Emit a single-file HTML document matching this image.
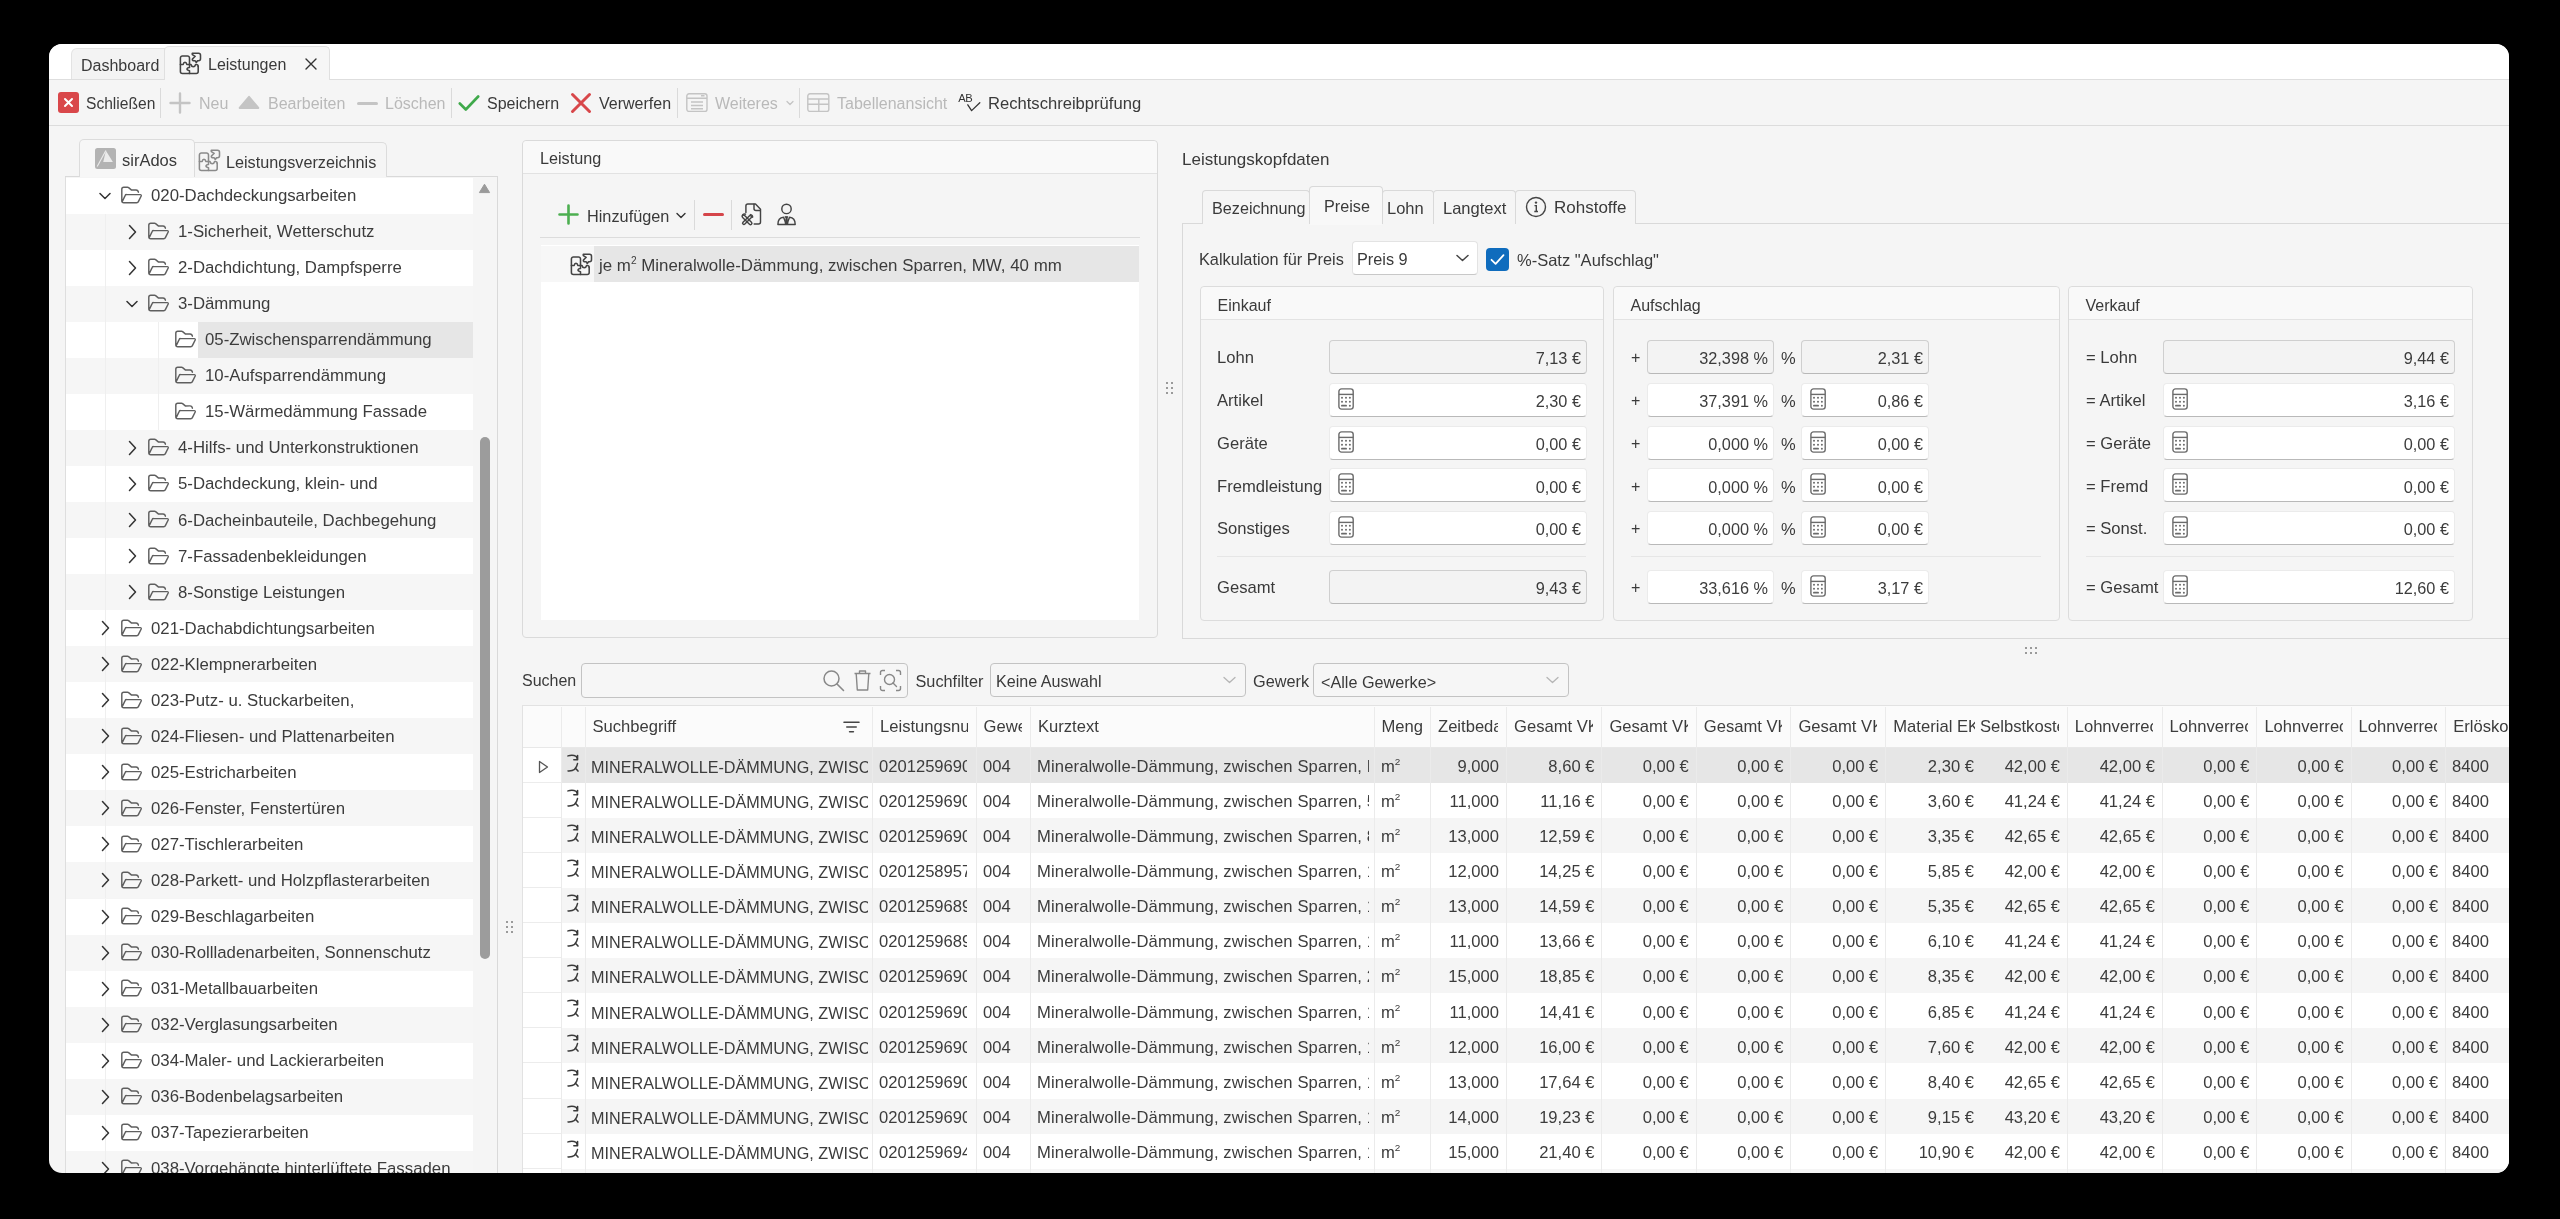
<!DOCTYPE html><html><head><meta charset="utf-8"><title>Leistungen</title><style>

html,body{margin:0;padding:0;}
body{width:2560px;height:1219px;background:#000;position:relative;overflow:hidden;font-family:"Liberation Sans",sans-serif;}
.a{position:absolute;box-sizing:border-box;}
.t{white-space:nowrap;}
sup{font-size:60%;line-height:0;vertical-align:0.68em;}
#win{position:absolute;left:49px;top:44px;width:2460px;height:1129px;border-radius:13px;background:#f5f5f5;overflow:hidden;}

</style></head><body>
<div id="win"></div>
<div class="a" style="left:0;top:0;width:2560px;height:1219px;clip-path:inset(44px 51px 46px 49px round 13px);will-change:transform;">
<div class="a" style="left:49px;top:44px;width:2460px;height:36px;background:#ffffff;"></div>
<div class="a" style="left:71px;top:48px;width:94px;height:32px;background:#f3f3f3;border:1px solid #e3e3e3;border-bottom:none;border-radius:6px 0 0 0;"></div>
<div class="a t" style="left:81px;top:53.6px;line-height:24px;font-size:16px;color:#3a3a3a;">Dashboard</div>
<div class="a" style="left:49px;top:79px;width:2460px;height:1px;background:#dedede;"></div>
<div class="a" style="left:164px;top:46px;width:166px;height:35px;background:#f6f6f6;border:1px solid #e0e0e0;border-bottom:none;border-radius:5px 5px 0 0;"></div>
<svg class="a" style="left:176.0px;top:48.0px;" width="30" height="30" viewBox="0 0 30 30" fill="none"><g stroke="#444" stroke-width="1.55" stroke-linejoin="round" stroke-linecap="round" fill="none"><path d="M13.5 16.5 V9.9 A2 2 0 0 0 11.5 7.9 H6.4 A2 2 0 0 0 4.4 9.9 V23.4 A2 2 0 0 0 6.4 25.4 H20.2 A2 2 0 0 0 22.2 23.4 V18.5"/><path d="M4.4 16.5 H7.2 C7.6 13.6 10.4 13.6 10.8 16.5 H15 C15.6 19.4 18.9 19.4 19.6 16.5 H20.2 A2 2 0 0 1 22.2 18.5"/><path d="M13.5 16.5 V19.5 C10.2 19.8 10.2 22.2 13.5 22.7 V25.4"/><path d="M16.3 5.2 C16 6.3 16.5 7 17.5 7.3 L19.2 8.3 L17 10.5 C16.2 11 16 12 17 12.7 L19.2 12.8 L20.3 14.5 L21.5 12.8 H22.5 A2 2 0 0 0 24.5 10.8 V7.2 A2 2 0 0 0 22.5 5.2 Z"/></g></svg>
<div class="a t" style="left:208px;top:52.5px;line-height:24px;font-size:16px;color:#3a3a3a;">Leistungen</div>
<svg class="a" style="left:304px;top:57px;" width="14" height="14" viewBox="0 0 14 14" fill="none"><path d="M2 2 L12 12 M12 2 L2 12" stroke="#333" stroke-width="1.4" stroke-linecap="round"/></svg>
<div class="a" style="left:49px;top:80px;width:2460px;height:45px;background:#f5f5f5;"></div>
<div class="a" style="left:49px;top:125px;width:2460px;height:1px;background:#dcdcdc;"></div>
<div class="a" style="left:58px;top:92px;width:21px;height:21px;background:#d9474a;border-radius:3px;"></div>
<svg class="a" style="left:58px;top:92px;" width="21" height="21" viewBox="0 0 21 21" fill="none"><path d="M7 7 L14 14 M14 7 L7 14" stroke="#fff" stroke-width="2" stroke-linecap="round"/></svg>
<div class="a t" style="left:86px;top:91.5px;line-height:24px;font-size:15.6px;color:#3a3a3a;">Schließen</div>
<div class="a" style="left:160px;top:88px;width:1px;height:30px;background:#dadada;"></div>
<svg class="a" style="left:169px;top:92px;" width="22" height="22" viewBox="0 0 22 22" fill="none"><path d="M11 1.5 V20.5 M1.5 11 H20.5" stroke="#c4c4c4" stroke-width="2.4" stroke-linecap="round"/></svg>
<div class="a t" style="left:199px;top:91.5px;line-height:24px;font-size:16px;color:#b9b9b9;">Neu</div>
<svg class="a" style="left:238px;top:95px;" width="22" height="15" viewBox="0 0 22 15" fill="none"><path d="M11 1.8 L20.3 13 H1.7 Z" fill="#c4c4c4" stroke="#c4c4c4" stroke-width="2" stroke-linejoin="round"/></svg>
<div class="a t" style="left:268px;top:91.5px;line-height:24px;font-size:16px;color:#b9b9b9;">Bearbeiten</div>
<div class="a" style="left:357px;top:102px;width:21px;height:3px;background:#c4c4c4;border-radius:1.5px;"></div>
<div class="a t" style="left:385px;top:91.5px;line-height:24px;font-size:16px;color:#b9b9b9;">Löschen</div>
<div class="a" style="left:451px;top:88px;width:1px;height:30px;background:#dadada;"></div>
<svg class="a" style="left:458px;top:94px;" width="22" height="18" viewBox="0 0 22 18" fill="none"><path d="M1.8 9.5 L7.8 15.5 L20.2 2.5" stroke="#3fa94a" stroke-width="2.6" stroke-linecap="round" stroke-linejoin="round"/></svg>
<div class="a t" style="left:487px;top:91.5px;line-height:24px;font-size:16px;color:#3a3a3a;">Speichern</div>
<svg class="a" style="left:570px;top:92px;" width="22" height="22" viewBox="0 0 22 22" fill="none"><path d="M2.5 2.5 L19.5 19.5 M19.5 2.5 L2.5 19.5" stroke="#d8474a" stroke-width="3" stroke-linecap="round"/></svg>
<div class="a t" style="left:599px;top:91.5px;line-height:24px;font-size:16px;color:#3a3a3a;">Verwerfen</div>
<div class="a" style="left:677px;top:88px;width:1px;height:30px;background:#dadada;"></div>
<svg class="a" style="left:686px;top:93px;" width="22" height="20" viewBox="0 0 22 20" fill="none"><g stroke="#c4c4c4" stroke-width="1.4" fill="none"><rect x="0.8" y="0.8" width="20.2" height="17.6" rx="2.2"/><path d="M0.8 5.2 H21 M5 9 H17 M5 12.5 H17 M5 15.8 H17 M15 2.8 H18.5"/></g></svg>
<div class="a t" style="left:715px;top:91.5px;line-height:24px;font-size:16px;color:#b9b9b9;">Weiteres</div>
<svg class="a" style="left:785.5px;top:100px;" width="8" height="6" viewBox="0 0 8 6" fill="none"><path d="M1 1.5 L4.0 4.5 L7 1.5" stroke="#c4c4c4" stroke-width="1.3" stroke-linecap="round" stroke-linejoin="round"/></svg>
<div class="a" style="left:799px;top:88px;width:1px;height:30px;background:#dadada;"></div>
<svg class="a" style="left:807px;top:93px;" width="23" height="20" viewBox="0 0 23 20" fill="none"><g stroke="#c4c4c4" stroke-width="1.4" fill="none"><rect x="0.8" y="0.8" width="21" height="17.6" rx="2.2"/><path d="M0.8 6 H21.8 M0.8 11.2 H21.8 M11.8 6 V18.4"/></g></svg>
<div class="a t" style="left:837px;top:91.5px;line-height:24px;font-size:16px;color:#b9b9b9;">Tabellenansicht</div>
<div class="a t" style="left:958.3px;top:91.2px;line-height:14px;font-size:11.2px;color:#333;letter-spacing:-0.4px;">AB</div>
<svg class="a" style="left:966px;top:101px;" width="16" height="12" viewBox="0 0 16 12" fill="none"><path d="M1.8 3.8 L5.6 9.6 L13.8 1.8" stroke="#333" stroke-width="1.3" stroke-linecap="round" stroke-linejoin="round"/></svg>
<div class="a t" style="left:988px;top:91.5px;line-height:24px;font-size:16.6px;color:#3a3a3a;">Rechtschreibprüfung</div>
<div class="a" style="left:65px;top:176px;width:433px;height:1px;background:#d9d9d9;"></div>
<div class="a" style="left:79px;top:139px;width:116px;height:39px;background:#f7f7f7;border:1px solid #dcdcdc;border-bottom:none;border-radius:5px 5px 0 0;"></div>
<div class="a" style="left:194px;top:142px;width:193px;height:35px;background:#f5f5f5;border:1px solid #dcdcdc;border-bottom:none;border-radius:0 5px 0 0;"></div>
<svg class="a" style="left:95px;top:148px;" width="21" height="21" viewBox="0 0 21 21" fill="none"><rect x="0" y="0" width="21" height="21" rx="2.5" fill="#b3b3b3"/><path d="M10.9 2.8 L17.9 14 H8.2 Z" fill="#ebebeb"/><path d="M10.9 2.6 L2.2 18.6" stroke="#ebebeb" stroke-width="1.1"/></svg>
<div class="a t" style="left:122px;top:147.5px;line-height:24px;font-size:16.5px;color:#3a3a3a;">sirAdos</div>
<svg class="a" style="left:195.0px;top:144.70000000000002px;" width="30" height="30" viewBox="0 0 30 30" fill="none"><g stroke="#8a8a8a" stroke-width="1.55" stroke-linejoin="round" stroke-linecap="round" fill="none"><path d="M13.5 16.5 V9.9 A2 2 0 0 0 11.5 7.9 H6.4 A2 2 0 0 0 4.4 9.9 V23.4 A2 2 0 0 0 6.4 25.4 H20.2 A2 2 0 0 0 22.2 23.4 V18.5"/><path d="M4.4 16.5 H7.2 C7.6 13.6 10.4 13.6 10.8 16.5 H15 C15.6 19.4 18.9 19.4 19.6 16.5 H20.2 A2 2 0 0 1 22.2 18.5"/><path d="M13.5 16.5 V19.5 C10.2 19.8 10.2 22.2 13.5 22.7 V25.4"/><path d="M16.3 5.2 C16 6.3 16.5 7 17.5 7.3 L19.2 8.3 L17 10.5 C16.2 11 16 12 17 12.7 L19.2 12.8 L20.3 14.5 L21.5 12.8 H22.5 A2 2 0 0 0 24.5 10.8 V7.2 A2 2 0 0 0 22.5 5.2 Z"/></g></svg>
<div class="a t" style="left:226px;top:149.5px;line-height:24px;font-size:16.2px;color:#3a3a3a;">Leistungsverzeichnis</div>
<div class="a" style="left:65px;top:177px;width:433px;height:996px;background:#f5f5f5;border-left:1px solid #dedede;border-right:1px solid #d9d9d9;"></div>
<div class="a" style="left:66px;top:177.5px;width:407px;height:36px;background:#ffffff;"></div>
<svg class="a" style="left:99px;top:191.5px;" width="12" height="8" viewBox="0 0 12 8" fill="none"><path d="M1 1.5 L6.0 6.5 L11 1.5" stroke="#333" stroke-width="1.5" stroke-linecap="round" stroke-linejoin="round"/></svg>
<svg class="a" style="left:116px;top:182.0px;" width="30" height="26" viewBox="0 0 30 26" fill="none"><path d="M22.4 10.2 C22.2 8.8 21.3 7.9 20 7.9 H15.3 L12.6 5.6 C12.3 5.35 12 5.3 11.6 5.3 H7.8 A2 2 0 0 0 5.8 7.3 V18.7 A2 2 0 0 0 7.8 20.7 H20.6 A2 2 0 0 0 22.5 19.4 L25.2 14 A1 1 0 0 0 24.3 12.6 H10.6 A1.6 1.6 0 0 0 9.1 13.6 L6.2 19.8" stroke="#5f5f5f" stroke-width="1.45" stroke-linejoin="round" stroke-linecap="round" fill="none"/></svg>
<div class="a t" style="left:151px;top:184.0px;line-height:24px;font-size:16.8px;color:#3c3c3c;">020-Dachdeckungsarbeiten</div>
<div class="a" style="left:66px;top:213.55px;width:407px;height:36px;background:#f6f6f6;"></div>
<div class="a" style="left:105px;top:213.55px;width:1px;height:36.05px;background:#efefef;"></div>
<svg class="a" style="left:128px;top:223.55px;" width="9" height="16" viewBox="0 0 9 16" fill="none"><path d="M1.5 1.5 L7.5 8 L1.5 14.5" stroke="#333" stroke-width="1.5" stroke-linecap="round" stroke-linejoin="round"/></svg>
<svg class="a" style="left:143px;top:218.05px;" width="30" height="26" viewBox="0 0 30 26" fill="none"><path d="M22.4 10.2 C22.2 8.8 21.3 7.9 20 7.9 H15.3 L12.6 5.6 C12.3 5.35 12 5.3 11.6 5.3 H7.8 A2 2 0 0 0 5.8 7.3 V18.7 A2 2 0 0 0 7.8 20.7 H20.6 A2 2 0 0 0 22.5 19.4 L25.2 14 A1 1 0 0 0 24.3 12.6 H10.6 A1.6 1.6 0 0 0 9.1 13.6 L6.2 19.8" stroke="#5f5f5f" stroke-width="1.45" stroke-linejoin="round" stroke-linecap="round" fill="none"/></svg>
<div class="a t" style="left:178px;top:220.1px;line-height:24px;font-size:16.8px;color:#3c3c3c;">1-Sicherheit, Wetterschutz</div>
<div class="a" style="left:66px;top:249.6px;width:407px;height:36px;background:#ffffff;"></div>
<div class="a" style="left:105px;top:249.6px;width:1px;height:36.05px;background:#efefef;"></div>
<svg class="a" style="left:128px;top:259.6px;" width="9" height="16" viewBox="0 0 9 16" fill="none"><path d="M1.5 1.5 L7.5 8 L1.5 14.5" stroke="#333" stroke-width="1.5" stroke-linecap="round" stroke-linejoin="round"/></svg>
<svg class="a" style="left:143px;top:254.10000000000002px;" width="30" height="26" viewBox="0 0 30 26" fill="none"><path d="M22.4 10.2 C22.2 8.8 21.3 7.9 20 7.9 H15.3 L12.6 5.6 C12.3 5.35 12 5.3 11.6 5.3 H7.8 A2 2 0 0 0 5.8 7.3 V18.7 A2 2 0 0 0 7.8 20.7 H20.6 A2 2 0 0 0 22.5 19.4 L25.2 14 A1 1 0 0 0 24.3 12.6 H10.6 A1.6 1.6 0 0 0 9.1 13.6 L6.2 19.8" stroke="#5f5f5f" stroke-width="1.45" stroke-linejoin="round" stroke-linecap="round" fill="none"/></svg>
<div class="a t" style="left:178px;top:256.1px;line-height:24px;font-size:16.8px;color:#3c3c3c;">2-Dachdichtung, Dampfsperre</div>
<div class="a" style="left:66px;top:285.65px;width:407px;height:36px;background:#f6f6f6;"></div>
<div class="a" style="left:105px;top:285.65px;width:1px;height:36.05px;background:#efefef;"></div>
<svg class="a" style="left:126px;top:299.65px;" width="12" height="8" viewBox="0 0 12 8" fill="none"><path d="M1 1.5 L6.0 6.5 L11 1.5" stroke="#333" stroke-width="1.5" stroke-linecap="round" stroke-linejoin="round"/></svg>
<svg class="a" style="left:143px;top:290.15px;" width="30" height="26" viewBox="0 0 30 26" fill="none"><path d="M22.4 10.2 C22.2 8.8 21.3 7.9 20 7.9 H15.3 L12.6 5.6 C12.3 5.35 12 5.3 11.6 5.3 H7.8 A2 2 0 0 0 5.8 7.3 V18.7 A2 2 0 0 0 7.8 20.7 H20.6 A2 2 0 0 0 22.5 19.4 L25.2 14 A1 1 0 0 0 24.3 12.6 H10.6 A1.6 1.6 0 0 0 9.1 13.6 L6.2 19.8" stroke="#5f5f5f" stroke-width="1.45" stroke-linejoin="round" stroke-linecap="round" fill="none"/></svg>
<div class="a t" style="left:178px;top:292.1px;line-height:24px;font-size:16.8px;color:#3c3c3c;">3-Dämmung</div>
<div class="a" style="left:66px;top:321.7px;width:407px;height:36px;background:#ffffff;"></div>
<div class="a" style="left:198px;top:321.7px;width:275px;height:36px;background:#e6e6e6;"></div>
<div class="a" style="left:105px;top:321.7px;width:1px;height:36.05px;background:#efefef;"></div>
<div class="a" style="left:158px;top:321.7px;width:1px;height:36.05px;background:#efefef;"></div>
<svg class="a" style="left:170px;top:326.2px;" width="30" height="26" viewBox="0 0 30 26" fill="none"><path d="M22.4 10.2 C22.2 8.8 21.3 7.9 20 7.9 H15.3 L12.6 5.6 C12.3 5.35 12 5.3 11.6 5.3 H7.8 A2 2 0 0 0 5.8 7.3 V18.7 A2 2 0 0 0 7.8 20.7 H20.6 A2 2 0 0 0 22.5 19.4 L25.2 14 A1 1 0 0 0 24.3 12.6 H10.6 A1.6 1.6 0 0 0 9.1 13.6 L6.2 19.8" stroke="#5f5f5f" stroke-width="1.45" stroke-linejoin="round" stroke-linecap="round" fill="none"/></svg>
<div class="a t" style="left:205px;top:328.2px;line-height:24px;font-size:16.8px;color:#3c3c3c;">05-Zwischensparrendämmung</div>
<div class="a" style="left:66px;top:357.75px;width:407px;height:36px;background:#f6f6f6;"></div>
<div class="a" style="left:105px;top:357.75px;width:1px;height:36.05px;background:#efefef;"></div>
<div class="a" style="left:158px;top:357.75px;width:1px;height:36.05px;background:#efefef;"></div>
<svg class="a" style="left:170px;top:362.25px;" width="30" height="26" viewBox="0 0 30 26" fill="none"><path d="M22.4 10.2 C22.2 8.8 21.3 7.9 20 7.9 H15.3 L12.6 5.6 C12.3 5.35 12 5.3 11.6 5.3 H7.8 A2 2 0 0 0 5.8 7.3 V18.7 A2 2 0 0 0 7.8 20.7 H20.6 A2 2 0 0 0 22.5 19.4 L25.2 14 A1 1 0 0 0 24.3 12.6 H10.6 A1.6 1.6 0 0 0 9.1 13.6 L6.2 19.8" stroke="#5f5f5f" stroke-width="1.45" stroke-linejoin="round" stroke-linecap="round" fill="none"/></svg>
<div class="a t" style="left:205px;top:364.2px;line-height:24px;font-size:16.8px;color:#3c3c3c;">10-Aufsparrendämmung</div>
<div class="a" style="left:66px;top:393.79999999999995px;width:407px;height:36px;background:#ffffff;"></div>
<div class="a" style="left:105px;top:393.79999999999995px;width:1px;height:36.05px;background:#efefef;"></div>
<div class="a" style="left:158px;top:393.79999999999995px;width:1px;height:36.05px;background:#efefef;"></div>
<svg class="a" style="left:170px;top:398.29999999999995px;" width="30" height="26" viewBox="0 0 30 26" fill="none"><path d="M22.4 10.2 C22.2 8.8 21.3 7.9 20 7.9 H15.3 L12.6 5.6 C12.3 5.35 12 5.3 11.6 5.3 H7.8 A2 2 0 0 0 5.8 7.3 V18.7 A2 2 0 0 0 7.8 20.7 H20.6 A2 2 0 0 0 22.5 19.4 L25.2 14 A1 1 0 0 0 24.3 12.6 H10.6 A1.6 1.6 0 0 0 9.1 13.6 L6.2 19.8" stroke="#5f5f5f" stroke-width="1.45" stroke-linejoin="round" stroke-linecap="round" fill="none"/></svg>
<div class="a t" style="left:205px;top:400.3px;line-height:24px;font-size:16.8px;color:#3c3c3c;">15-Wärmedämmung Fassade</div>
<div class="a" style="left:66px;top:429.84999999999997px;width:407px;height:36px;background:#f6f6f6;"></div>
<div class="a" style="left:105px;top:429.84999999999997px;width:1px;height:36.05px;background:#efefef;"></div>
<svg class="a" style="left:128px;top:439.84999999999997px;" width="9" height="16" viewBox="0 0 9 16" fill="none"><path d="M1.5 1.5 L7.5 8 L1.5 14.5" stroke="#333" stroke-width="1.5" stroke-linecap="round" stroke-linejoin="round"/></svg>
<svg class="a" style="left:143px;top:434.34999999999997px;" width="30" height="26" viewBox="0 0 30 26" fill="none"><path d="M22.4 10.2 C22.2 8.8 21.3 7.9 20 7.9 H15.3 L12.6 5.6 C12.3 5.35 12 5.3 11.6 5.3 H7.8 A2 2 0 0 0 5.8 7.3 V18.7 A2 2 0 0 0 7.8 20.7 H20.6 A2 2 0 0 0 22.5 19.4 L25.2 14 A1 1 0 0 0 24.3 12.6 H10.6 A1.6 1.6 0 0 0 9.1 13.6 L6.2 19.8" stroke="#5f5f5f" stroke-width="1.45" stroke-linejoin="round" stroke-linecap="round" fill="none"/></svg>
<div class="a t" style="left:178px;top:436.3px;line-height:24px;font-size:16.8px;color:#3c3c3c;">4-Hilfs- und Unterkonstruktionen</div>
<div class="a" style="left:66px;top:465.9px;width:407px;height:36px;background:#ffffff;"></div>
<div class="a" style="left:105px;top:465.9px;width:1px;height:36.05px;background:#efefef;"></div>
<svg class="a" style="left:128px;top:475.9px;" width="9" height="16" viewBox="0 0 9 16" fill="none"><path d="M1.5 1.5 L7.5 8 L1.5 14.5" stroke="#333" stroke-width="1.5" stroke-linecap="round" stroke-linejoin="round"/></svg>
<svg class="a" style="left:143px;top:470.4px;" width="30" height="26" viewBox="0 0 30 26" fill="none"><path d="M22.4 10.2 C22.2 8.8 21.3 7.9 20 7.9 H15.3 L12.6 5.6 C12.3 5.35 12 5.3 11.6 5.3 H7.8 A2 2 0 0 0 5.8 7.3 V18.7 A2 2 0 0 0 7.8 20.7 H20.6 A2 2 0 0 0 22.5 19.4 L25.2 14 A1 1 0 0 0 24.3 12.6 H10.6 A1.6 1.6 0 0 0 9.1 13.6 L6.2 19.8" stroke="#5f5f5f" stroke-width="1.45" stroke-linejoin="round" stroke-linecap="round" fill="none"/></svg>
<div class="a t" style="left:178px;top:472.4px;line-height:24px;font-size:16.8px;color:#3c3c3c;">5-Dachdeckung, klein- und</div>
<div class="a" style="left:66px;top:501.95px;width:407px;height:36px;background:#f6f6f6;"></div>
<div class="a" style="left:105px;top:501.95px;width:1px;height:36.05px;background:#efefef;"></div>
<svg class="a" style="left:128px;top:511.95000000000005px;" width="9" height="16" viewBox="0 0 9 16" fill="none"><path d="M1.5 1.5 L7.5 8 L1.5 14.5" stroke="#333" stroke-width="1.5" stroke-linecap="round" stroke-linejoin="round"/></svg>
<svg class="a" style="left:143px;top:506.45000000000005px;" width="30" height="26" viewBox="0 0 30 26" fill="none"><path d="M22.4 10.2 C22.2 8.8 21.3 7.9 20 7.9 H15.3 L12.6 5.6 C12.3 5.35 12 5.3 11.6 5.3 H7.8 A2 2 0 0 0 5.8 7.3 V18.7 A2 2 0 0 0 7.8 20.7 H20.6 A2 2 0 0 0 22.5 19.4 L25.2 14 A1 1 0 0 0 24.3 12.6 H10.6 A1.6 1.6 0 0 0 9.1 13.6 L6.2 19.8" stroke="#5f5f5f" stroke-width="1.45" stroke-linejoin="round" stroke-linecap="round" fill="none"/></svg>
<div class="a t" style="left:178px;top:508.5px;line-height:24px;font-size:16.8px;color:#3c3c3c;">6-Dacheinbauteile, Dachbegehung</div>
<div class="a" style="left:66px;top:538.0px;width:407px;height:36px;background:#ffffff;"></div>
<div class="a" style="left:105px;top:538.0px;width:1px;height:36.05px;background:#efefef;"></div>
<svg class="a" style="left:128px;top:548.0px;" width="9" height="16" viewBox="0 0 9 16" fill="none"><path d="M1.5 1.5 L7.5 8 L1.5 14.5" stroke="#333" stroke-width="1.5" stroke-linecap="round" stroke-linejoin="round"/></svg>
<svg class="a" style="left:143px;top:542.5px;" width="30" height="26" viewBox="0 0 30 26" fill="none"><path d="M22.4 10.2 C22.2 8.8 21.3 7.9 20 7.9 H15.3 L12.6 5.6 C12.3 5.35 12 5.3 11.6 5.3 H7.8 A2 2 0 0 0 5.8 7.3 V18.7 A2 2 0 0 0 7.8 20.7 H20.6 A2 2 0 0 0 22.5 19.4 L25.2 14 A1 1 0 0 0 24.3 12.6 H10.6 A1.6 1.6 0 0 0 9.1 13.6 L6.2 19.8" stroke="#5f5f5f" stroke-width="1.45" stroke-linejoin="round" stroke-linecap="round" fill="none"/></svg>
<div class="a t" style="left:178px;top:544.5px;line-height:24px;font-size:16.8px;color:#3c3c3c;">7-Fassadenbekleidungen</div>
<div class="a" style="left:66px;top:574.05px;width:407px;height:36px;background:#f6f6f6;"></div>
<div class="a" style="left:105px;top:574.05px;width:1px;height:36.05px;background:#efefef;"></div>
<svg class="a" style="left:128px;top:584.05px;" width="9" height="16" viewBox="0 0 9 16" fill="none"><path d="M1.5 1.5 L7.5 8 L1.5 14.5" stroke="#333" stroke-width="1.5" stroke-linecap="round" stroke-linejoin="round"/></svg>
<svg class="a" style="left:143px;top:578.55px;" width="30" height="26" viewBox="0 0 30 26" fill="none"><path d="M22.4 10.2 C22.2 8.8 21.3 7.9 20 7.9 H15.3 L12.6 5.6 C12.3 5.35 12 5.3 11.6 5.3 H7.8 A2 2 0 0 0 5.8 7.3 V18.7 A2 2 0 0 0 7.8 20.7 H20.6 A2 2 0 0 0 22.5 19.4 L25.2 14 A1 1 0 0 0 24.3 12.6 H10.6 A1.6 1.6 0 0 0 9.1 13.6 L6.2 19.8" stroke="#5f5f5f" stroke-width="1.45" stroke-linejoin="round" stroke-linecap="round" fill="none"/></svg>
<div class="a t" style="left:178px;top:580.5px;line-height:24px;font-size:16.8px;color:#3c3c3c;">8-Sonstige Leistungen</div>
<div class="a" style="left:66px;top:610.0999999999999px;width:407px;height:36px;background:#ffffff;"></div>
<div class="a" style="left:105px;top:610.0999999999999px;width:1px;height:36.05px;background:#efefef;"></div>
<svg class="a" style="left:101px;top:620.0999999999999px;" width="9" height="16" viewBox="0 0 9 16" fill="none"><path d="M1.5 1.5 L7.5 8 L1.5 14.5" stroke="#333" stroke-width="1.5" stroke-linecap="round" stroke-linejoin="round"/></svg>
<svg class="a" style="left:116px;top:614.5999999999999px;" width="30" height="26" viewBox="0 0 30 26" fill="none"><path d="M22.4 10.2 C22.2 8.8 21.3 7.9 20 7.9 H15.3 L12.6 5.6 C12.3 5.35 12 5.3 11.6 5.3 H7.8 A2 2 0 0 0 5.8 7.3 V18.7 A2 2 0 0 0 7.8 20.7 H20.6 A2 2 0 0 0 22.5 19.4 L25.2 14 A1 1 0 0 0 24.3 12.6 H10.6 A1.6 1.6 0 0 0 9.1 13.6 L6.2 19.8" stroke="#5f5f5f" stroke-width="1.45" stroke-linejoin="round" stroke-linecap="round" fill="none"/></svg>
<div class="a t" style="left:151px;top:616.6px;line-height:24px;font-size:16.8px;color:#3c3c3c;">021-Dachabdichtungsarbeiten</div>
<div class="a" style="left:66px;top:646.15px;width:407px;height:36px;background:#f6f6f6;"></div>
<div class="a" style="left:105px;top:646.15px;width:1px;height:36.05px;background:#efefef;"></div>
<svg class="a" style="left:101px;top:656.15px;" width="9" height="16" viewBox="0 0 9 16" fill="none"><path d="M1.5 1.5 L7.5 8 L1.5 14.5" stroke="#333" stroke-width="1.5" stroke-linecap="round" stroke-linejoin="round"/></svg>
<svg class="a" style="left:116px;top:650.65px;" width="30" height="26" viewBox="0 0 30 26" fill="none"><path d="M22.4 10.2 C22.2 8.8 21.3 7.9 20 7.9 H15.3 L12.6 5.6 C12.3 5.35 12 5.3 11.6 5.3 H7.8 A2 2 0 0 0 5.8 7.3 V18.7 A2 2 0 0 0 7.8 20.7 H20.6 A2 2 0 0 0 22.5 19.4 L25.2 14 A1 1 0 0 0 24.3 12.6 H10.6 A1.6 1.6 0 0 0 9.1 13.6 L6.2 19.8" stroke="#5f5f5f" stroke-width="1.45" stroke-linejoin="round" stroke-linecap="round" fill="none"/></svg>
<div class="a t" style="left:151px;top:652.6px;line-height:24px;font-size:16.8px;color:#3c3c3c;">022-Klempnerarbeiten</div>
<div class="a" style="left:66px;top:682.1999999999999px;width:407px;height:36px;background:#ffffff;"></div>
<div class="a" style="left:105px;top:682.1999999999999px;width:1px;height:36.05px;background:#efefef;"></div>
<svg class="a" style="left:101px;top:692.1999999999999px;" width="9" height="16" viewBox="0 0 9 16" fill="none"><path d="M1.5 1.5 L7.5 8 L1.5 14.5" stroke="#333" stroke-width="1.5" stroke-linecap="round" stroke-linejoin="round"/></svg>
<svg class="a" style="left:116px;top:686.6999999999999px;" width="30" height="26" viewBox="0 0 30 26" fill="none"><path d="M22.4 10.2 C22.2 8.8 21.3 7.9 20 7.9 H15.3 L12.6 5.6 C12.3 5.35 12 5.3 11.6 5.3 H7.8 A2 2 0 0 0 5.8 7.3 V18.7 A2 2 0 0 0 7.8 20.7 H20.6 A2 2 0 0 0 22.5 19.4 L25.2 14 A1 1 0 0 0 24.3 12.6 H10.6 A1.6 1.6 0 0 0 9.1 13.6 L6.2 19.8" stroke="#5f5f5f" stroke-width="1.45" stroke-linejoin="round" stroke-linecap="round" fill="none"/></svg>
<div class="a t" style="left:151px;top:688.7px;line-height:24px;font-size:16.8px;color:#3c3c3c;">023-Putz- u. Stuckarbeiten,</div>
<div class="a" style="left:66px;top:718.25px;width:407px;height:36px;background:#f6f6f6;"></div>
<div class="a" style="left:105px;top:718.25px;width:1px;height:36.05px;background:#efefef;"></div>
<svg class="a" style="left:101px;top:728.25px;" width="9" height="16" viewBox="0 0 9 16" fill="none"><path d="M1.5 1.5 L7.5 8 L1.5 14.5" stroke="#333" stroke-width="1.5" stroke-linecap="round" stroke-linejoin="round"/></svg>
<svg class="a" style="left:116px;top:722.75px;" width="30" height="26" viewBox="0 0 30 26" fill="none"><path d="M22.4 10.2 C22.2 8.8 21.3 7.9 20 7.9 H15.3 L12.6 5.6 C12.3 5.35 12 5.3 11.6 5.3 H7.8 A2 2 0 0 0 5.8 7.3 V18.7 A2 2 0 0 0 7.8 20.7 H20.6 A2 2 0 0 0 22.5 19.4 L25.2 14 A1 1 0 0 0 24.3 12.6 H10.6 A1.6 1.6 0 0 0 9.1 13.6 L6.2 19.8" stroke="#5f5f5f" stroke-width="1.45" stroke-linejoin="round" stroke-linecap="round" fill="none"/></svg>
<div class="a t" style="left:151px;top:724.8px;line-height:24px;font-size:16.8px;color:#3c3c3c;">024-Fliesen- und Plattenarbeiten</div>
<div class="a" style="left:66px;top:754.3px;width:407px;height:36px;background:#ffffff;"></div>
<div class="a" style="left:105px;top:754.3px;width:1px;height:36.05px;background:#efefef;"></div>
<svg class="a" style="left:101px;top:764.3px;" width="9" height="16" viewBox="0 0 9 16" fill="none"><path d="M1.5 1.5 L7.5 8 L1.5 14.5" stroke="#333" stroke-width="1.5" stroke-linecap="round" stroke-linejoin="round"/></svg>
<svg class="a" style="left:116px;top:758.8px;" width="30" height="26" viewBox="0 0 30 26" fill="none"><path d="M22.4 10.2 C22.2 8.8 21.3 7.9 20 7.9 H15.3 L12.6 5.6 C12.3 5.35 12 5.3 11.6 5.3 H7.8 A2 2 0 0 0 5.8 7.3 V18.7 A2 2 0 0 0 7.8 20.7 H20.6 A2 2 0 0 0 22.5 19.4 L25.2 14 A1 1 0 0 0 24.3 12.6 H10.6 A1.6 1.6 0 0 0 9.1 13.6 L6.2 19.8" stroke="#5f5f5f" stroke-width="1.45" stroke-linejoin="round" stroke-linecap="round" fill="none"/></svg>
<div class="a t" style="left:151px;top:760.8px;line-height:24px;font-size:16.8px;color:#3c3c3c;">025-Estricharbeiten</div>
<div class="a" style="left:66px;top:790.3499999999999px;width:407px;height:36px;background:#f6f6f6;"></div>
<div class="a" style="left:105px;top:790.3499999999999px;width:1px;height:36.05px;background:#efefef;"></div>
<svg class="a" style="left:101px;top:800.3499999999999px;" width="9" height="16" viewBox="0 0 9 16" fill="none"><path d="M1.5 1.5 L7.5 8 L1.5 14.5" stroke="#333" stroke-width="1.5" stroke-linecap="round" stroke-linejoin="round"/></svg>
<svg class="a" style="left:116px;top:794.8499999999999px;" width="30" height="26" viewBox="0 0 30 26" fill="none"><path d="M22.4 10.2 C22.2 8.8 21.3 7.9 20 7.9 H15.3 L12.6 5.6 C12.3 5.35 12 5.3 11.6 5.3 H7.8 A2 2 0 0 0 5.8 7.3 V18.7 A2 2 0 0 0 7.8 20.7 H20.6 A2 2 0 0 0 22.5 19.4 L25.2 14 A1 1 0 0 0 24.3 12.6 H10.6 A1.6 1.6 0 0 0 9.1 13.6 L6.2 19.8" stroke="#5f5f5f" stroke-width="1.45" stroke-linejoin="round" stroke-linecap="round" fill="none"/></svg>
<div class="a t" style="left:151px;top:796.8px;line-height:24px;font-size:16.8px;color:#3c3c3c;">026-Fenster, Fenstertüren</div>
<div class="a" style="left:66px;top:826.4px;width:407px;height:36px;background:#ffffff;"></div>
<div class="a" style="left:105px;top:826.4px;width:1px;height:36.05px;background:#efefef;"></div>
<svg class="a" style="left:101px;top:836.4px;" width="9" height="16" viewBox="0 0 9 16" fill="none"><path d="M1.5 1.5 L7.5 8 L1.5 14.5" stroke="#333" stroke-width="1.5" stroke-linecap="round" stroke-linejoin="round"/></svg>
<svg class="a" style="left:116px;top:830.9px;" width="30" height="26" viewBox="0 0 30 26" fill="none"><path d="M22.4 10.2 C22.2 8.8 21.3 7.9 20 7.9 H15.3 L12.6 5.6 C12.3 5.35 12 5.3 11.6 5.3 H7.8 A2 2 0 0 0 5.8 7.3 V18.7 A2 2 0 0 0 7.8 20.7 H20.6 A2 2 0 0 0 22.5 19.4 L25.2 14 A1 1 0 0 0 24.3 12.6 H10.6 A1.6 1.6 0 0 0 9.1 13.6 L6.2 19.8" stroke="#5f5f5f" stroke-width="1.45" stroke-linejoin="round" stroke-linecap="round" fill="none"/></svg>
<div class="a t" style="left:151px;top:832.9px;line-height:24px;font-size:16.8px;color:#3c3c3c;">027-Tischlerarbeiten</div>
<div class="a" style="left:66px;top:862.4499999999999px;width:407px;height:36px;background:#f6f6f6;"></div>
<div class="a" style="left:105px;top:862.4499999999999px;width:1px;height:36.05px;background:#efefef;"></div>
<svg class="a" style="left:101px;top:872.4499999999999px;" width="9" height="16" viewBox="0 0 9 16" fill="none"><path d="M1.5 1.5 L7.5 8 L1.5 14.5" stroke="#333" stroke-width="1.5" stroke-linecap="round" stroke-linejoin="round"/></svg>
<svg class="a" style="left:116px;top:866.9499999999999px;" width="30" height="26" viewBox="0 0 30 26" fill="none"><path d="M22.4 10.2 C22.2 8.8 21.3 7.9 20 7.9 H15.3 L12.6 5.6 C12.3 5.35 12 5.3 11.6 5.3 H7.8 A2 2 0 0 0 5.8 7.3 V18.7 A2 2 0 0 0 7.8 20.7 H20.6 A2 2 0 0 0 22.5 19.4 L25.2 14 A1 1 0 0 0 24.3 12.6 H10.6 A1.6 1.6 0 0 0 9.1 13.6 L6.2 19.8" stroke="#5f5f5f" stroke-width="1.45" stroke-linejoin="round" stroke-linecap="round" fill="none"/></svg>
<div class="a t" style="left:151px;top:868.9px;line-height:24px;font-size:16.8px;color:#3c3c3c;">028-Parkett- und Holzpflasterarbeiten</div>
<div class="a" style="left:66px;top:898.5px;width:407px;height:36px;background:#ffffff;"></div>
<div class="a" style="left:105px;top:898.5px;width:1px;height:36.05px;background:#efefef;"></div>
<svg class="a" style="left:101px;top:908.5px;" width="9" height="16" viewBox="0 0 9 16" fill="none"><path d="M1.5 1.5 L7.5 8 L1.5 14.5" stroke="#333" stroke-width="1.5" stroke-linecap="round" stroke-linejoin="round"/></svg>
<svg class="a" style="left:116px;top:903.0px;" width="30" height="26" viewBox="0 0 30 26" fill="none"><path d="M22.4 10.2 C22.2 8.8 21.3 7.9 20 7.9 H15.3 L12.6 5.6 C12.3 5.35 12 5.3 11.6 5.3 H7.8 A2 2 0 0 0 5.8 7.3 V18.7 A2 2 0 0 0 7.8 20.7 H20.6 A2 2 0 0 0 22.5 19.4 L25.2 14 A1 1 0 0 0 24.3 12.6 H10.6 A1.6 1.6 0 0 0 9.1 13.6 L6.2 19.8" stroke="#5f5f5f" stroke-width="1.45" stroke-linejoin="round" stroke-linecap="round" fill="none"/></svg>
<div class="a t" style="left:151px;top:905.0px;line-height:24px;font-size:16.8px;color:#3c3c3c;">029-Beschlagarbeiten</div>
<div class="a" style="left:66px;top:934.55px;width:407px;height:36px;background:#f6f6f6;"></div>
<div class="a" style="left:105px;top:934.55px;width:1px;height:36.05px;background:#efefef;"></div>
<svg class="a" style="left:101px;top:944.55px;" width="9" height="16" viewBox="0 0 9 16" fill="none"><path d="M1.5 1.5 L7.5 8 L1.5 14.5" stroke="#333" stroke-width="1.5" stroke-linecap="round" stroke-linejoin="round"/></svg>
<svg class="a" style="left:116px;top:939.05px;" width="30" height="26" viewBox="0 0 30 26" fill="none"><path d="M22.4 10.2 C22.2 8.8 21.3 7.9 20 7.9 H15.3 L12.6 5.6 C12.3 5.35 12 5.3 11.6 5.3 H7.8 A2 2 0 0 0 5.8 7.3 V18.7 A2 2 0 0 0 7.8 20.7 H20.6 A2 2 0 0 0 22.5 19.4 L25.2 14 A1 1 0 0 0 24.3 12.6 H10.6 A1.6 1.6 0 0 0 9.1 13.6 L6.2 19.8" stroke="#5f5f5f" stroke-width="1.45" stroke-linejoin="round" stroke-linecap="round" fill="none"/></svg>
<div class="a t" style="left:151px;top:941.0px;line-height:24px;font-size:16.8px;color:#3c3c3c;">030-Rollladenarbeiten, Sonnenschutz</div>
<div class="a" style="left:66px;top:970.5999999999999px;width:407px;height:36px;background:#ffffff;"></div>
<div class="a" style="left:105px;top:970.5999999999999px;width:1px;height:36.05px;background:#efefef;"></div>
<svg class="a" style="left:101px;top:980.5999999999999px;" width="9" height="16" viewBox="0 0 9 16" fill="none"><path d="M1.5 1.5 L7.5 8 L1.5 14.5" stroke="#333" stroke-width="1.5" stroke-linecap="round" stroke-linejoin="round"/></svg>
<svg class="a" style="left:116px;top:975.0999999999999px;" width="30" height="26" viewBox="0 0 30 26" fill="none"><path d="M22.4 10.2 C22.2 8.8 21.3 7.9 20 7.9 H15.3 L12.6 5.6 C12.3 5.35 12 5.3 11.6 5.3 H7.8 A2 2 0 0 0 5.8 7.3 V18.7 A2 2 0 0 0 7.8 20.7 H20.6 A2 2 0 0 0 22.5 19.4 L25.2 14 A1 1 0 0 0 24.3 12.6 H10.6 A1.6 1.6 0 0 0 9.1 13.6 L6.2 19.8" stroke="#5f5f5f" stroke-width="1.45" stroke-linejoin="round" stroke-linecap="round" fill="none"/></svg>
<div class="a t" style="left:151px;top:977.1px;line-height:24px;font-size:16.8px;color:#3c3c3c;">031-Metallbauarbeiten</div>
<div class="a" style="left:66px;top:1006.65px;width:407px;height:36px;background:#f6f6f6;"></div>
<div class="a" style="left:105px;top:1006.65px;width:1px;height:36.05px;background:#efefef;"></div>
<svg class="a" style="left:101px;top:1016.6500000000001px;" width="9" height="16" viewBox="0 0 9 16" fill="none"><path d="M1.5 1.5 L7.5 8 L1.5 14.5" stroke="#333" stroke-width="1.5" stroke-linecap="round" stroke-linejoin="round"/></svg>
<svg class="a" style="left:116px;top:1011.1500000000001px;" width="30" height="26" viewBox="0 0 30 26" fill="none"><path d="M22.4 10.2 C22.2 8.8 21.3 7.9 20 7.9 H15.3 L12.6 5.6 C12.3 5.35 12 5.3 11.6 5.3 H7.8 A2 2 0 0 0 5.8 7.3 V18.7 A2 2 0 0 0 7.8 20.7 H20.6 A2 2 0 0 0 22.5 19.4 L25.2 14 A1 1 0 0 0 24.3 12.6 H10.6 A1.6 1.6 0 0 0 9.1 13.6 L6.2 19.8" stroke="#5f5f5f" stroke-width="1.45" stroke-linejoin="round" stroke-linecap="round" fill="none"/></svg>
<div class="a t" style="left:151px;top:1013.2px;line-height:24px;font-size:16.8px;color:#3c3c3c;">032-Verglasungsarbeiten</div>
<div class="a" style="left:66px;top:1042.6999999999998px;width:407px;height:36px;background:#ffffff;"></div>
<div class="a" style="left:105px;top:1042.6999999999998px;width:1px;height:36.05px;background:#efefef;"></div>
<svg class="a" style="left:101px;top:1052.6999999999998px;" width="9" height="16" viewBox="0 0 9 16" fill="none"><path d="M1.5 1.5 L7.5 8 L1.5 14.5" stroke="#333" stroke-width="1.5" stroke-linecap="round" stroke-linejoin="round"/></svg>
<svg class="a" style="left:116px;top:1047.1999999999998px;" width="30" height="26" viewBox="0 0 30 26" fill="none"><path d="M22.4 10.2 C22.2 8.8 21.3 7.9 20 7.9 H15.3 L12.6 5.6 C12.3 5.35 12 5.3 11.6 5.3 H7.8 A2 2 0 0 0 5.8 7.3 V18.7 A2 2 0 0 0 7.8 20.7 H20.6 A2 2 0 0 0 22.5 19.4 L25.2 14 A1 1 0 0 0 24.3 12.6 H10.6 A1.6 1.6 0 0 0 9.1 13.6 L6.2 19.8" stroke="#5f5f5f" stroke-width="1.45" stroke-linejoin="round" stroke-linecap="round" fill="none"/></svg>
<div class="a t" style="left:151px;top:1049.2px;line-height:24px;font-size:16.8px;color:#3c3c3c;">034-Maler- und Lackierarbeiten</div>
<div class="a" style="left:66px;top:1078.75px;width:407px;height:36px;background:#f6f6f6;"></div>
<div class="a" style="left:105px;top:1078.75px;width:1px;height:36.05px;background:#efefef;"></div>
<svg class="a" style="left:101px;top:1088.75px;" width="9" height="16" viewBox="0 0 9 16" fill="none"><path d="M1.5 1.5 L7.5 8 L1.5 14.5" stroke="#333" stroke-width="1.5" stroke-linecap="round" stroke-linejoin="round"/></svg>
<svg class="a" style="left:116px;top:1083.25px;" width="30" height="26" viewBox="0 0 30 26" fill="none"><path d="M22.4 10.2 C22.2 8.8 21.3 7.9 20 7.9 H15.3 L12.6 5.6 C12.3 5.35 12 5.3 11.6 5.3 H7.8 A2 2 0 0 0 5.8 7.3 V18.7 A2 2 0 0 0 7.8 20.7 H20.6 A2 2 0 0 0 22.5 19.4 L25.2 14 A1 1 0 0 0 24.3 12.6 H10.6 A1.6 1.6 0 0 0 9.1 13.6 L6.2 19.8" stroke="#5f5f5f" stroke-width="1.45" stroke-linejoin="round" stroke-linecap="round" fill="none"/></svg>
<div class="a t" style="left:151px;top:1085.2px;line-height:24px;font-size:16.8px;color:#3c3c3c;">036-Bodenbelagsarbeiten</div>
<div class="a" style="left:66px;top:1114.8px;width:407px;height:36px;background:#ffffff;"></div>
<div class="a" style="left:105px;top:1114.8px;width:1px;height:36.05px;background:#efefef;"></div>
<svg class="a" style="left:101px;top:1124.8px;" width="9" height="16" viewBox="0 0 9 16" fill="none"><path d="M1.5 1.5 L7.5 8 L1.5 14.5" stroke="#333" stroke-width="1.5" stroke-linecap="round" stroke-linejoin="round"/></svg>
<svg class="a" style="left:116px;top:1119.3px;" width="30" height="26" viewBox="0 0 30 26" fill="none"><path d="M22.4 10.2 C22.2 8.8 21.3 7.9 20 7.9 H15.3 L12.6 5.6 C12.3 5.35 12 5.3 11.6 5.3 H7.8 A2 2 0 0 0 5.8 7.3 V18.7 A2 2 0 0 0 7.8 20.7 H20.6 A2 2 0 0 0 22.5 19.4 L25.2 14 A1 1 0 0 0 24.3 12.6 H10.6 A1.6 1.6 0 0 0 9.1 13.6 L6.2 19.8" stroke="#5f5f5f" stroke-width="1.45" stroke-linejoin="round" stroke-linecap="round" fill="none"/></svg>
<div class="a t" style="left:151px;top:1121.3px;line-height:24px;font-size:16.8px;color:#3c3c3c;">037-Tapezierarbeiten</div>
<div class="a" style="left:66px;top:1150.85px;width:407px;height:36px;background:#f6f6f6;"></div>
<div class="a" style="left:105px;top:1150.85px;width:1px;height:36.05px;background:#efefef;"></div>
<svg class="a" style="left:101px;top:1160.85px;" width="9" height="16" viewBox="0 0 9 16" fill="none"><path d="M1.5 1.5 L7.5 8 L1.5 14.5" stroke="#333" stroke-width="1.5" stroke-linecap="round" stroke-linejoin="round"/></svg>
<svg class="a" style="left:116px;top:1155.35px;" width="30" height="26" viewBox="0 0 30 26" fill="none"><path d="M22.4 10.2 C22.2 8.8 21.3 7.9 20 7.9 H15.3 L12.6 5.6 C12.3 5.35 12 5.3 11.6 5.3 H7.8 A2 2 0 0 0 5.8 7.3 V18.7 A2 2 0 0 0 7.8 20.7 H20.6 A2 2 0 0 0 22.5 19.4 L25.2 14 A1 1 0 0 0 24.3 12.6 H10.6 A1.6 1.6 0 0 0 9.1 13.6 L6.2 19.8" stroke="#5f5f5f" stroke-width="1.45" stroke-linejoin="round" stroke-linecap="round" fill="none"/></svg>
<div class="a t" style="left:151px;top:1157.3px;line-height:24px;font-size:16.8px;color:#3c3c3c;">038-Vorgehängte hinterlüftete Fassaden</div>
<svg class="a" style="left:478px;top:183px;" width="13" height="11" viewBox="0 0 13 11" fill="none"><path d="M6.5 1.2 L11.6 9.6 H1.4 Z" fill="#9a9a9a" stroke="#9a9a9a" stroke-width="1" stroke-linejoin="round"/></svg>
<div class="a" style="left:480px;top:437px;width:10px;height:522px;background:#9c9c9c;border-radius:5px;"></div>
<svg class="a" style="left:506px;top:921px;" width="7" height="12" viewBox="0 0 7 12" fill="none"><rect x="0" y="0" width="2" height="2" fill="#9a9a9a"/><rect x="0" y="5" width="2" height="2" fill="#9a9a9a"/><rect x="0" y="10" width="2" height="2" fill="#9a9a9a"/><rect x="5" y="0" width="2" height="2" fill="#9a9a9a"/><rect x="5" y="5" width="2" height="2" fill="#9a9a9a"/><rect x="5" y="10" width="2" height="2" fill="#9a9a9a"/></svg>
<svg class="a" style="left:1166px;top:382px;" width="7" height="12" viewBox="0 0 7 12" fill="none"><rect x="0" y="0" width="2" height="2" fill="#9a9a9a"/><rect x="0" y="5" width="2" height="2" fill="#9a9a9a"/><rect x="0" y="10" width="2" height="2" fill="#9a9a9a"/><rect x="5" y="0" width="2" height="2" fill="#9a9a9a"/><rect x="5" y="5" width="2" height="2" fill="#9a9a9a"/><rect x="5" y="10" width="2" height="2" fill="#9a9a9a"/></svg>
<svg class="a" style="left:2025px;top:647px;" width="12" height="7" viewBox="0 0 12 7" fill="none"><rect x="0" y="0" width="2" height="2" fill="#9a9a9a"/><rect x="0" y="5" width="2" height="2" fill="#9a9a9a"/><rect x="5" y="0" width="2" height="2" fill="#9a9a9a"/><rect x="5" y="5" width="2" height="2" fill="#9a9a9a"/><rect x="10" y="0" width="2" height="2" fill="#9a9a9a"/><rect x="10" y="5" width="2" height="2" fill="#9a9a9a"/></svg>
<div class="a" style="left:522px;top:140px;width:636px;height:498px;background:#f5f5f5;border:1px solid #dadada;border-radius:4px;"></div>
<div class="a" style="left:523px;top:141px;width:634px;height:33px;background:#f9f9f9;border-bottom:1px solid #e2e2e2;border-radius:4px 4px 0 0;"></div>
<div class="a t" style="left:540px;top:146.0px;line-height:24px;font-size:16.2px;color:#3a3a3a;">Leistung</div>
<svg class="a" style="left:558px;top:204px;" width="21" height="21" viewBox="0 0 21 21" fill="none"><path d="M10.5 1.5 V19.5 M1.5 10.5 H19.5" stroke="#4caf50" stroke-width="2.6" stroke-linecap="round"/></svg>
<div class="a t" style="left:587px;top:203.5px;line-height:24px;font-size:16.3px;color:#3a3a3a;">Hinzufügen</div>
<svg class="a" style="left:676px;top:212px;" width="10" height="7" viewBox="0 0 10 7" fill="none"><path d="M1 1.5 L5.0 5.5 L9 1.5" stroke="#333" stroke-width="1.4" stroke-linecap="round" stroke-linejoin="round"/></svg>
<div class="a" style="left:694px;top:200px;width:1px;height:30px;background:#dadada;"></div>
<div class="a" style="left:703px;top:213px;width:21px;height:3px;background:#d5454a;border-radius:1.5px;"></div>
<div class="a" style="left:731px;top:200px;width:1px;height:30px;background:#dadada;"></div>
<svg class="a" style="left:736px;top:198px;" width="66" height="34" viewBox="0 0 66 34" fill="none"><g stroke="#444" stroke-width="1.45" fill="none" stroke-linejoin="round" stroke-linecap="round"><path d="M9.9 14.6 V8 A2 2 0 0 1 11.9 6 H19.5 L24.5 11.2 V24 A2 2 0 0 1 22.5 26 H18.2"/><path d="M18 6.3 V10.4 A2 2 0 0 0 20 12.4 H24.3"/><rect x="9.6" y="15.6" width="2.8" height="12.5" rx="1.4" transform="rotate(-45 11 21.8)"/><rect x="9.8" y="16.3" width="2.6" height="11.5" rx="1.3" transform="rotate(45 11.1 22)"/><path d="M6.3 17.6 a2.2 2.2 0 0 1 3.2 -1.4 M14.4 16.6 a2.3 2.3 0 0 1 2.2 2.6"/><circle cx="50.5" cy="10.9" r="4.7"/><path d="M41.9 26.4 C41.9 22.3 44.3 19.6 47.6 19.3 L50.3 26.4 Z M59.2 26.4 C59.2 22.3 56.8 19.6 53.5 19.3 L50.8 26.4 Z M41.9 26.5 H59.2"/><path d="M49.3 18.6 H51.8 L51.2 20.8 L52 25.8 H49.1 L49.9 20.8 Z" fill="#444" stroke-width="0.8"/></g></svg>
<div class="a" style="left:540px;top:237px;width:600px;height:1px;background:#dcdcdc;"></div>
<div class="a" style="left:541px;top:245px;width:598px;height:375px;background:#ffffff;"></div>
<div class="a" style="left:541px;top:246px;width:53px;height:36px;background:#f7f7f7;"></div>
<div class="a" style="left:594px;top:246px;width:545px;height:36px;background:#e6e6e6;"></div>
<svg class="a" style="left:566.5px;top:249.0px;" width="30" height="30" viewBox="0 0 30 30" fill="none"><g stroke="#444" stroke-width="1.55" stroke-linejoin="round" stroke-linecap="round" fill="none"><path d="M13.5 16.5 V9.9 A2 2 0 0 0 11.5 7.9 H6.4 A2 2 0 0 0 4.4 9.9 V23.4 A2 2 0 0 0 6.4 25.4 H20.2 A2 2 0 0 0 22.2 23.4 V18.5"/><path d="M4.4 16.5 H7.2 C7.6 13.6 10.4 13.6 10.8 16.5 H15 C15.6 19.4 18.9 19.4 19.6 16.5 H20.2 A2 2 0 0 1 22.2 18.5"/><path d="M13.5 16.5 V19.5 C10.2 19.8 10.2 22.2 13.5 22.7 V25.4"/><path d="M16.3 5.2 C16 6.3 16.5 7 17.5 7.3 L19.2 8.3 L17 10.5 C16.2 11 16 12 17 12.7 L19.2 12.8 L20.3 14.5 L21.5 12.8 H22.5 A2 2 0 0 0 24.5 10.8 V7.2 A2 2 0 0 0 22.5 5.2 Z"/></g></svg>
<div class="a t" style="left:599px;top:254.0px;line-height:24px;font-size:16.9px;color:#3c3c3c;">je m<sup>2</sup> Mineralwolle-Dämmung, zwischen Sparren, MW, 40 mm</div>
<div class="a t" style="left:1182px;top:148.0px;line-height:24px;font-size:17px;color:#3a3a3a;">Leistungskopfdaten</div>
<div class="a" style="left:1182px;top:223px;width:1340px;height:416px;background:#f5f5f5;border:1px solid #d9d9d9;border-right:none;"></div>
<div class="a" style="left:1202px;top:190px;width:108px;height:34px;background:#f5f5f5;border:1px solid #d9d9d9;border-bottom:none;border-radius:4px 4px 0 0;"></div>
<div class="a" style="left:1382px;top:190px;width:52px;height:34px;background:#f5f5f5;border:1px solid #d9d9d9;border-bottom:none;border-radius:4px 4px 0 0;"></div>
<div class="a" style="left:1433px;top:190px;width:83px;height:34px;background:#f5f5f5;border:1px solid #d9d9d9;border-bottom:none;border-radius:4px 4px 0 0;"></div>
<div class="a" style="left:1515px;top:190px;width:121px;height:34px;background:#f5f5f5;border:1px solid #d9d9d9;border-bottom:none;border-radius:4px 4px 0 0;"></div>
<div class="a" style="left:1309px;top:186px;width:74px;height:38px;background:#f8f8f8;border:1px solid #d9d9d9;border-bottom:none;border-radius:4px 4px 0 0;"></div>
<div class="a" style="left:1310px;top:223px;width:72px;height:2px;background:#f8f8f8;"></div>
<div class="a t" style="left:1212px;top:196.0px;line-height:24px;font-size:16.2px;color:#3a3a3a;">Bezeichnung</div>
<div class="a t" style="left:1324px;top:194.0px;line-height:24px;font-size:16.2px;color:#3a3a3a;">Preise</div>
<div class="a t" style="left:1387px;top:196.0px;line-height:24px;font-size:16.5px;color:#3a3a3a;">Lohn</div>
<div class="a t" style="left:1443px;top:196.0px;line-height:24px;font-size:16.5px;color:#3a3a3a;">Langtext</div>
<svg class="a" style="left:1525px;top:196px;" width="22" height="22" viewBox="0 0 22 22" fill="none"><circle cx="11" cy="11" r="9.5" stroke="#444" stroke-width="1.4" fill="none"/><circle cx="11" cy="6.6" r="1.2" fill="#444"/><path d="M9.5 9.6 H11.3 V15.5 M9.3 15.5 H13" stroke="#444" stroke-width="1.4"/></svg>
<div class="a t" style="left:1554px;top:196.0px;line-height:24px;font-size:17px;color:#3a3a3a;">Rohstoffe</div>
<div class="a t" style="left:1199px;top:246.5px;line-height:24px;font-size:16.3px;color:#3a3a3a;">Kalkulation für Preis</div>
<div class="a" style="left:1352px;top:241px;width:126px;height:34px;background:#ffffff;border:1px solid #e3e3e3;border-bottom:1px solid #c8c8c8;border-radius:4px;"></div>
<div class="a t" style="left:1357px;top:246.5px;line-height:24px;font-size:16.3px;color:#3a3a3a;">Preis 9</div>
<svg class="a" style="left:1456px;top:254px;" width="13" height="8" viewBox="0 0 13 8" fill="none"><path d="M1 1.5 L6.5 6.5 L12 1.5" stroke="#444" stroke-width="1.5" stroke-linecap="round" stroke-linejoin="round"/></svg>
<div class="a" style="left:1486px;top:248px;width:23px;height:23px;background:#0f6cbd;border-radius:4px;"></div>
<svg class="a" style="left:1486px;top:248px;" width="23" height="23" viewBox="0 0 23 23" fill="none"><path d="M5.5 11.8 L9.6 15.8 L17.5 7.2" stroke="#fff" stroke-width="1.8" fill="none" stroke-linecap="round" stroke-linejoin="round"/></svg>
<div class="a t" style="left:1517px;top:248.0px;line-height:24px;font-size:16.5px;color:#3a3a3a;">%-Satz "Aufschlag"</div>
<div class="a" style="left:1200px;top:286px;width:404px;height:335px;background:#f5f5f5;border:1px solid #dcdcdc;border-radius:4px;"></div>
<div class="a" style="left:1201px;top:287px;width:402px;height:33px;background:#f9f9f9;border-bottom:1px solid #e3e3e3;border-radius:4px 4px 0 0;"></div>
<div class="a t" style="left:1217.5px;top:294.0px;line-height:24px;font-size:16px;color:#3a3a3a;">Einkauf</div>
<div class="a" style="left:1613px;top:286px;width:447px;height:335px;background:#f5f5f5;border:1px solid #dcdcdc;border-radius:4px;"></div>
<div class="a" style="left:1614px;top:287px;width:445px;height:33px;background:#f9f9f9;border-bottom:1px solid #e3e3e3;border-radius:4px 4px 0 0;"></div>
<div class="a t" style="left:1630.5px;top:294.0px;line-height:24px;font-size:16px;color:#3a3a3a;">Aufschlag</div>
<div class="a" style="left:2068px;top:286px;width:405px;height:335px;background:#f5f5f5;border:1px solid #dcdcdc;border-radius:4px;"></div>
<div class="a" style="left:2069px;top:287px;width:403px;height:33px;background:#f9f9f9;border-bottom:1px solid #e3e3e3;border-radius:4px 4px 0 0;"></div>
<div class="a t" style="left:2085.5px;top:294.0px;line-height:24px;font-size:16px;color:#3a3a3a;">Verkauf</div>
<div class="a" style="left:1217px;top:556px;width:369px;height:1px;background:#e6e6e6;"></div>
<div class="a" style="left:1631px;top:556px;width:410px;height:1px;background:#e6e6e6;"></div>
<div class="a" style="left:2086px;top:556px;width:368px;height:1px;background:#e6e6e6;"></div>
<div class="a t" style="left:1217px;top:346.0px;line-height:24px;font-size:16.6px;color:#3a3a3a;">Lohn</div>
<div class="a" style="left:1329px;top:340px;width:258px;height:34px;background:#f3f3f3;border:1px solid #cfcfcf;border-bottom:1px solid #b8b8b8;border-radius:4px;"></div>
<div class="a t" style="right:979px;top:346.0px;line-height:24px;font-size:16.3px;color:#3c3c3c;text-align:right;">7,13 €</div>
<div class="a t" style="left:1631px;top:346.0px;line-height:24px;font-size:16px;color:#3a3a3a;">+</div>
<div class="a" style="left:1647px;top:340px;width:127px;height:34px;background:#f3f3f3;border:1px solid #cfcfcf;border-bottom:1px solid #b8b8b8;border-radius:4px;"></div>
<div class="a t" style="right:792px;top:346.0px;line-height:24px;font-size:16.3px;color:#3c3c3c;text-align:right;">32,398 %</div>
<div class="a t" style="left:1781px;top:346.0px;line-height:24px;font-size:16.5px;color:#3a3a3a;">%</div>
<div class="a" style="left:1801px;top:340px;width:128px;height:34px;background:#f3f3f3;border:1px solid #cfcfcf;border-bottom:1px solid #b8b8b8;border-radius:4px;"></div>
<div class="a t" style="right:637px;top:346.0px;line-height:24px;font-size:16.3px;color:#3c3c3c;text-align:right;">2,31 €</div>
<div class="a t" style="left:2086px;top:346.0px;line-height:24px;font-size:16.6px;color:#3a3a3a;">= Lohn</div>
<div class="a" style="left:2163px;top:340px;width:292px;height:34px;background:#f3f3f3;border:1px solid #cfcfcf;border-bottom:1px solid #b8b8b8;border-radius:4px;"></div>
<div class="a t" style="right:111px;top:346.0px;line-height:24px;font-size:16.3px;color:#3c3c3c;text-align:right;">9,44 €</div>
<div class="a t" style="left:1217px;top:389.0px;line-height:24px;font-size:16.6px;color:#3a3a3a;">Artikel</div>
<div class="a" style="left:1329px;top:383px;width:258px;height:34px;background:#ffffff;border:1px solid #ebebeb;border-bottom:1px solid #b9b9b9;border-radius:4px;"></div>
<svg class="a" style="left:1338px;top:388px;" width="16" height="22" viewBox="0 0 16 22" fill="none"><g stroke="#6b6b6b" stroke-width="1.4" fill="none"><rect x="0.9" y="0.9" width="14.3" height="20.2" rx="2.6"/><path d="M0.9 6.4 H15.2"/></g><g fill="#6b6b6b"><circle cx="4" cy="9.8" r="1"/><circle cx="8" cy="9.8" r="1"/><circle cx="11.9" cy="9.8" r="1"/><circle cx="4" cy="13.7" r="1"/><circle cx="8" cy="13.7" r="1"/><circle cx="11.9" cy="13.7" r="1"/><rect x="3" y="16.8" width="6" height="1.8" rx="0.9"/><circle cx="11.9" cy="17.7" r="1"/></g></svg>
<div class="a t" style="right:979px;top:389.0px;line-height:24px;font-size:16.3px;color:#3c3c3c;text-align:right;">2,30 €</div>
<div class="a t" style="left:1631px;top:389.0px;line-height:24px;font-size:16px;color:#3a3a3a;">+</div>
<div class="a" style="left:1647px;top:383px;width:127px;height:34px;background:#ffffff;border:1px solid #ebebeb;border-bottom:1px solid #b9b9b9;border-radius:4px;"></div>
<div class="a t" style="right:792px;top:389.0px;line-height:24px;font-size:16.3px;color:#3c3c3c;text-align:right;">37,391 %</div>
<div class="a t" style="left:1781px;top:389.0px;line-height:24px;font-size:16.5px;color:#3a3a3a;">%</div>
<div class="a" style="left:1801px;top:383px;width:128px;height:34px;background:#ffffff;border:1px solid #ebebeb;border-bottom:1px solid #b9b9b9;border-radius:4px;"></div>
<svg class="a" style="left:1810px;top:388px;" width="16" height="22" viewBox="0 0 16 22" fill="none"><g stroke="#6b6b6b" stroke-width="1.4" fill="none"><rect x="0.9" y="0.9" width="14.3" height="20.2" rx="2.6"/><path d="M0.9 6.4 H15.2"/></g><g fill="#6b6b6b"><circle cx="4" cy="9.8" r="1"/><circle cx="8" cy="9.8" r="1"/><circle cx="11.9" cy="9.8" r="1"/><circle cx="4" cy="13.7" r="1"/><circle cx="8" cy="13.7" r="1"/><circle cx="11.9" cy="13.7" r="1"/><rect x="3" y="16.8" width="6" height="1.8" rx="0.9"/><circle cx="11.9" cy="17.7" r="1"/></g></svg>
<div class="a t" style="right:637px;top:389.0px;line-height:24px;font-size:16.3px;color:#3c3c3c;text-align:right;">0,86 €</div>
<div class="a t" style="left:2086px;top:389.0px;line-height:24px;font-size:16.6px;color:#3a3a3a;">= Artikel</div>
<div class="a" style="left:2163px;top:383px;width:292px;height:34px;background:#ffffff;border:1px solid #ebebeb;border-bottom:1px solid #b9b9b9;border-radius:4px;"></div>
<svg class="a" style="left:2172px;top:388px;" width="16" height="22" viewBox="0 0 16 22" fill="none"><g stroke="#6b6b6b" stroke-width="1.4" fill="none"><rect x="0.9" y="0.9" width="14.3" height="20.2" rx="2.6"/><path d="M0.9 6.4 H15.2"/></g><g fill="#6b6b6b"><circle cx="4" cy="9.8" r="1"/><circle cx="8" cy="9.8" r="1"/><circle cx="11.9" cy="9.8" r="1"/><circle cx="4" cy="13.7" r="1"/><circle cx="8" cy="13.7" r="1"/><circle cx="11.9" cy="13.7" r="1"/><rect x="3" y="16.8" width="6" height="1.8" rx="0.9"/><circle cx="11.9" cy="17.7" r="1"/></g></svg>
<div class="a t" style="right:111px;top:389.0px;line-height:24px;font-size:16.3px;color:#3c3c3c;text-align:right;">3,16 €</div>
<div class="a t" style="left:1217px;top:432.0px;line-height:24px;font-size:16.6px;color:#3a3a3a;">Geräte</div>
<div class="a" style="left:1329px;top:426px;width:258px;height:34px;background:#ffffff;border:1px solid #ebebeb;border-bottom:1px solid #b9b9b9;border-radius:4px;"></div>
<svg class="a" style="left:1338px;top:431px;" width="16" height="22" viewBox="0 0 16 22" fill="none"><g stroke="#6b6b6b" stroke-width="1.4" fill="none"><rect x="0.9" y="0.9" width="14.3" height="20.2" rx="2.6"/><path d="M0.9 6.4 H15.2"/></g><g fill="#6b6b6b"><circle cx="4" cy="9.8" r="1"/><circle cx="8" cy="9.8" r="1"/><circle cx="11.9" cy="9.8" r="1"/><circle cx="4" cy="13.7" r="1"/><circle cx="8" cy="13.7" r="1"/><circle cx="11.9" cy="13.7" r="1"/><rect x="3" y="16.8" width="6" height="1.8" rx="0.9"/><circle cx="11.9" cy="17.7" r="1"/></g></svg>
<div class="a t" style="right:979px;top:432.0px;line-height:24px;font-size:16.3px;color:#3c3c3c;text-align:right;">0,00 €</div>
<div class="a t" style="left:1631px;top:432.0px;line-height:24px;font-size:16px;color:#3a3a3a;">+</div>
<div class="a" style="left:1647px;top:426px;width:127px;height:34px;background:#ffffff;border:1px solid #ebebeb;border-bottom:1px solid #b9b9b9;border-radius:4px;"></div>
<div class="a t" style="right:792px;top:432.0px;line-height:24px;font-size:16.3px;color:#3c3c3c;text-align:right;">0,000 %</div>
<div class="a t" style="left:1781px;top:432.0px;line-height:24px;font-size:16.5px;color:#3a3a3a;">%</div>
<div class="a" style="left:1801px;top:426px;width:128px;height:34px;background:#ffffff;border:1px solid #ebebeb;border-bottom:1px solid #b9b9b9;border-radius:4px;"></div>
<svg class="a" style="left:1810px;top:431px;" width="16" height="22" viewBox="0 0 16 22" fill="none"><g stroke="#6b6b6b" stroke-width="1.4" fill="none"><rect x="0.9" y="0.9" width="14.3" height="20.2" rx="2.6"/><path d="M0.9 6.4 H15.2"/></g><g fill="#6b6b6b"><circle cx="4" cy="9.8" r="1"/><circle cx="8" cy="9.8" r="1"/><circle cx="11.9" cy="9.8" r="1"/><circle cx="4" cy="13.7" r="1"/><circle cx="8" cy="13.7" r="1"/><circle cx="11.9" cy="13.7" r="1"/><rect x="3" y="16.8" width="6" height="1.8" rx="0.9"/><circle cx="11.9" cy="17.7" r="1"/></g></svg>
<div class="a t" style="right:637px;top:432.0px;line-height:24px;font-size:16.3px;color:#3c3c3c;text-align:right;">0,00 €</div>
<div class="a t" style="left:2086px;top:432.0px;line-height:24px;font-size:16.6px;color:#3a3a3a;">= Geräte</div>
<div class="a" style="left:2163px;top:426px;width:292px;height:34px;background:#ffffff;border:1px solid #ebebeb;border-bottom:1px solid #b9b9b9;border-radius:4px;"></div>
<svg class="a" style="left:2172px;top:431px;" width="16" height="22" viewBox="0 0 16 22" fill="none"><g stroke="#6b6b6b" stroke-width="1.4" fill="none"><rect x="0.9" y="0.9" width="14.3" height="20.2" rx="2.6"/><path d="M0.9 6.4 H15.2"/></g><g fill="#6b6b6b"><circle cx="4" cy="9.8" r="1"/><circle cx="8" cy="9.8" r="1"/><circle cx="11.9" cy="9.8" r="1"/><circle cx="4" cy="13.7" r="1"/><circle cx="8" cy="13.7" r="1"/><circle cx="11.9" cy="13.7" r="1"/><rect x="3" y="16.8" width="6" height="1.8" rx="0.9"/><circle cx="11.9" cy="17.7" r="1"/></g></svg>
<div class="a t" style="right:111px;top:432.0px;line-height:24px;font-size:16.3px;color:#3c3c3c;text-align:right;">0,00 €</div>
<div class="a t" style="left:1217px;top:474.5px;line-height:24px;font-size:16.6px;color:#3a3a3a;">Fremdleistung</div>
<div class="a" style="left:1329px;top:468px;width:258px;height:34px;background:#ffffff;border:1px solid #ebebeb;border-bottom:1px solid #b9b9b9;border-radius:4px;"></div>
<svg class="a" style="left:1338px;top:473px;" width="16" height="22" viewBox="0 0 16 22" fill="none"><g stroke="#6b6b6b" stroke-width="1.4" fill="none"><rect x="0.9" y="0.9" width="14.3" height="20.2" rx="2.6"/><path d="M0.9 6.4 H15.2"/></g><g fill="#6b6b6b"><circle cx="4" cy="9.8" r="1"/><circle cx="8" cy="9.8" r="1"/><circle cx="11.9" cy="9.8" r="1"/><circle cx="4" cy="13.7" r="1"/><circle cx="8" cy="13.7" r="1"/><circle cx="11.9" cy="13.7" r="1"/><rect x="3" y="16.8" width="6" height="1.8" rx="0.9"/><circle cx="11.9" cy="17.7" r="1"/></g></svg>
<div class="a t" style="right:979px;top:474.5px;line-height:24px;font-size:16.3px;color:#3c3c3c;text-align:right;">0,00 €</div>
<div class="a t" style="left:1631px;top:474.5px;line-height:24px;font-size:16px;color:#3a3a3a;">+</div>
<div class="a" style="left:1647px;top:468px;width:127px;height:34px;background:#ffffff;border:1px solid #ebebeb;border-bottom:1px solid #b9b9b9;border-radius:4px;"></div>
<div class="a t" style="right:792px;top:474.5px;line-height:24px;font-size:16.3px;color:#3c3c3c;text-align:right;">0,000 %</div>
<div class="a t" style="left:1781px;top:474.5px;line-height:24px;font-size:16.5px;color:#3a3a3a;">%</div>
<div class="a" style="left:1801px;top:468px;width:128px;height:34px;background:#ffffff;border:1px solid #ebebeb;border-bottom:1px solid #b9b9b9;border-radius:4px;"></div>
<svg class="a" style="left:1810px;top:473px;" width="16" height="22" viewBox="0 0 16 22" fill="none"><g stroke="#6b6b6b" stroke-width="1.4" fill="none"><rect x="0.9" y="0.9" width="14.3" height="20.2" rx="2.6"/><path d="M0.9 6.4 H15.2"/></g><g fill="#6b6b6b"><circle cx="4" cy="9.8" r="1"/><circle cx="8" cy="9.8" r="1"/><circle cx="11.9" cy="9.8" r="1"/><circle cx="4" cy="13.7" r="1"/><circle cx="8" cy="13.7" r="1"/><circle cx="11.9" cy="13.7" r="1"/><rect x="3" y="16.8" width="6" height="1.8" rx="0.9"/><circle cx="11.9" cy="17.7" r="1"/></g></svg>
<div class="a t" style="right:637px;top:474.5px;line-height:24px;font-size:16.3px;color:#3c3c3c;text-align:right;">0,00 €</div>
<div class="a t" style="left:2086px;top:474.5px;line-height:24px;font-size:16.6px;color:#3a3a3a;">= Fremd</div>
<div class="a" style="left:2163px;top:468px;width:292px;height:34px;background:#ffffff;border:1px solid #ebebeb;border-bottom:1px solid #b9b9b9;border-radius:4px;"></div>
<svg class="a" style="left:2172px;top:473px;" width="16" height="22" viewBox="0 0 16 22" fill="none"><g stroke="#6b6b6b" stroke-width="1.4" fill="none"><rect x="0.9" y="0.9" width="14.3" height="20.2" rx="2.6"/><path d="M0.9 6.4 H15.2"/></g><g fill="#6b6b6b"><circle cx="4" cy="9.8" r="1"/><circle cx="8" cy="9.8" r="1"/><circle cx="11.9" cy="9.8" r="1"/><circle cx="4" cy="13.7" r="1"/><circle cx="8" cy="13.7" r="1"/><circle cx="11.9" cy="13.7" r="1"/><rect x="3" y="16.8" width="6" height="1.8" rx="0.9"/><circle cx="11.9" cy="17.7" r="1"/></g></svg>
<div class="a t" style="right:111px;top:474.5px;line-height:24px;font-size:16.3px;color:#3c3c3c;text-align:right;">0,00 €</div>
<div class="a t" style="left:1217px;top:517.0px;line-height:24px;font-size:16.6px;color:#3a3a3a;">Sonstiges</div>
<div class="a" style="left:1329px;top:511px;width:258px;height:34px;background:#ffffff;border:1px solid #ebebeb;border-bottom:1px solid #b9b9b9;border-radius:4px;"></div>
<svg class="a" style="left:1338px;top:516px;" width="16" height="22" viewBox="0 0 16 22" fill="none"><g stroke="#6b6b6b" stroke-width="1.4" fill="none"><rect x="0.9" y="0.9" width="14.3" height="20.2" rx="2.6"/><path d="M0.9 6.4 H15.2"/></g><g fill="#6b6b6b"><circle cx="4" cy="9.8" r="1"/><circle cx="8" cy="9.8" r="1"/><circle cx="11.9" cy="9.8" r="1"/><circle cx="4" cy="13.7" r="1"/><circle cx="8" cy="13.7" r="1"/><circle cx="11.9" cy="13.7" r="1"/><rect x="3" y="16.8" width="6" height="1.8" rx="0.9"/><circle cx="11.9" cy="17.7" r="1"/></g></svg>
<div class="a t" style="right:979px;top:517.0px;line-height:24px;font-size:16.3px;color:#3c3c3c;text-align:right;">0,00 €</div>
<div class="a t" style="left:1631px;top:517.0px;line-height:24px;font-size:16px;color:#3a3a3a;">+</div>
<div class="a" style="left:1647px;top:511px;width:127px;height:34px;background:#ffffff;border:1px solid #ebebeb;border-bottom:1px solid #b9b9b9;border-radius:4px;"></div>
<div class="a t" style="right:792px;top:517.0px;line-height:24px;font-size:16.3px;color:#3c3c3c;text-align:right;">0,000 %</div>
<div class="a t" style="left:1781px;top:517.0px;line-height:24px;font-size:16.5px;color:#3a3a3a;">%</div>
<div class="a" style="left:1801px;top:511px;width:128px;height:34px;background:#ffffff;border:1px solid #ebebeb;border-bottom:1px solid #b9b9b9;border-radius:4px;"></div>
<svg class="a" style="left:1810px;top:516px;" width="16" height="22" viewBox="0 0 16 22" fill="none"><g stroke="#6b6b6b" stroke-width="1.4" fill="none"><rect x="0.9" y="0.9" width="14.3" height="20.2" rx="2.6"/><path d="M0.9 6.4 H15.2"/></g><g fill="#6b6b6b"><circle cx="4" cy="9.8" r="1"/><circle cx="8" cy="9.8" r="1"/><circle cx="11.9" cy="9.8" r="1"/><circle cx="4" cy="13.7" r="1"/><circle cx="8" cy="13.7" r="1"/><circle cx="11.9" cy="13.7" r="1"/><rect x="3" y="16.8" width="6" height="1.8" rx="0.9"/><circle cx="11.9" cy="17.7" r="1"/></g></svg>
<div class="a t" style="right:637px;top:517.0px;line-height:24px;font-size:16.3px;color:#3c3c3c;text-align:right;">0,00 €</div>
<div class="a t" style="left:2086px;top:517.0px;line-height:24px;font-size:16.6px;color:#3a3a3a;">= Sonst.</div>
<div class="a" style="left:2163px;top:511px;width:292px;height:34px;background:#ffffff;border:1px solid #ebebeb;border-bottom:1px solid #b9b9b9;border-radius:4px;"></div>
<svg class="a" style="left:2172px;top:516px;" width="16" height="22" viewBox="0 0 16 22" fill="none"><g stroke="#6b6b6b" stroke-width="1.4" fill="none"><rect x="0.9" y="0.9" width="14.3" height="20.2" rx="2.6"/><path d="M0.9 6.4 H15.2"/></g><g fill="#6b6b6b"><circle cx="4" cy="9.8" r="1"/><circle cx="8" cy="9.8" r="1"/><circle cx="11.9" cy="9.8" r="1"/><circle cx="4" cy="13.7" r="1"/><circle cx="8" cy="13.7" r="1"/><circle cx="11.9" cy="13.7" r="1"/><rect x="3" y="16.8" width="6" height="1.8" rx="0.9"/><circle cx="11.9" cy="17.7" r="1"/></g></svg>
<div class="a t" style="right:111px;top:517.0px;line-height:24px;font-size:16.3px;color:#3c3c3c;text-align:right;">0,00 €</div>
<div class="a t" style="left:1217px;top:575.5px;line-height:24px;font-size:16.6px;color:#3a3a3a;">Gesamt</div>
<div class="a" style="left:1329px;top:570px;width:258px;height:34px;background:#f3f3f3;border:1px solid #cfcfcf;border-bottom:1px solid #b8b8b8;border-radius:4px;"></div>
<div class="a t" style="right:979px;top:575.5px;line-height:24px;font-size:16.3px;color:#3c3c3c;text-align:right;">9,43 €</div>
<div class="a t" style="left:1631px;top:575.5px;line-height:24px;font-size:16px;color:#3a3a3a;">+</div>
<div class="a" style="left:1647px;top:570px;width:127px;height:34px;background:#ffffff;border:1px solid #ebebeb;border-bottom:1px solid #b9b9b9;border-radius:4px;"></div>
<div class="a t" style="right:792px;top:575.5px;line-height:24px;font-size:16.3px;color:#3c3c3c;text-align:right;">33,616 %</div>
<div class="a t" style="left:1781px;top:575.5px;line-height:24px;font-size:16.5px;color:#3a3a3a;">%</div>
<div class="a" style="left:1801px;top:570px;width:128px;height:34px;background:#ffffff;border:1px solid #ebebeb;border-bottom:1px solid #b9b9b9;border-radius:4px;"></div>
<svg class="a" style="left:1810px;top:575px;" width="16" height="22" viewBox="0 0 16 22" fill="none"><g stroke="#6b6b6b" stroke-width="1.4" fill="none"><rect x="0.9" y="0.9" width="14.3" height="20.2" rx="2.6"/><path d="M0.9 6.4 H15.2"/></g><g fill="#6b6b6b"><circle cx="4" cy="9.8" r="1"/><circle cx="8" cy="9.8" r="1"/><circle cx="11.9" cy="9.8" r="1"/><circle cx="4" cy="13.7" r="1"/><circle cx="8" cy="13.7" r="1"/><circle cx="11.9" cy="13.7" r="1"/><rect x="3" y="16.8" width="6" height="1.8" rx="0.9"/><circle cx="11.9" cy="17.7" r="1"/></g></svg>
<div class="a t" style="right:637px;top:575.5px;line-height:24px;font-size:16.3px;color:#3c3c3c;text-align:right;">3,17 €</div>
<div class="a t" style="left:2086px;top:575.5px;line-height:24px;font-size:16.6px;color:#3a3a3a;">= Gesamt</div>
<div class="a" style="left:2163px;top:570px;width:292px;height:34px;background:#ffffff;border:1px solid #ebebeb;border-bottom:1px solid #b9b9b9;border-radius:4px;"></div>
<svg class="a" style="left:2172px;top:575px;" width="16" height="22" viewBox="0 0 16 22" fill="none"><g stroke="#6b6b6b" stroke-width="1.4" fill="none"><rect x="0.9" y="0.9" width="14.3" height="20.2" rx="2.6"/><path d="M0.9 6.4 H15.2"/></g><g fill="#6b6b6b"><circle cx="4" cy="9.8" r="1"/><circle cx="8" cy="9.8" r="1"/><circle cx="11.9" cy="9.8" r="1"/><circle cx="4" cy="13.7" r="1"/><circle cx="8" cy="13.7" r="1"/><circle cx="11.9" cy="13.7" r="1"/><rect x="3" y="16.8" width="6" height="1.8" rx="0.9"/><circle cx="11.9" cy="17.7" r="1"/></g></svg>
<div class="a t" style="right:111px;top:575.5px;line-height:24px;font-size:16.3px;color:#3c3c3c;text-align:right;">12,60 €</div>
<div class="a t" style="left:522px;top:669.0px;line-height:24px;font-size:16px;color:#3a3a3a;">Suchen</div>
<div class="a" style="left:581px;top:663px;width:327px;height:35px;background:#f6f6f6;border:1px solid #c3c3c3;border-radius:4px;"></div>
<svg class="a" style="left:822px;top:669px;" width="23" height="23" viewBox="0 0 23 23" fill="none"><circle cx="9.5" cy="9.5" r="7.5" stroke="#888" stroke-width="1.5" fill="none"/><path d="M15 15 L21.5 21.5" stroke="#888" stroke-width="1.6" stroke-linecap="round"/></svg>
<svg class="a" style="left:853px;top:669px;" width="19" height="23" viewBox="0 0 19 23" fill="none"><g stroke="#888" stroke-width="1.4" fill="none" stroke-linejoin="round"><path d="M1.5 4.5 H17.5 M6.5 4.5 V2 H12.5 V4.5"/><path d="M3.2 4.5 L4.3 21 H14.7 L15.8 4.5"/></g></svg>
<svg class="a" style="left:879px;top:669px;" width="23" height="23" viewBox="0 0 23 23" fill="none"><g stroke="#888" stroke-width="1.4" fill="none"><path d="M1.5 6 V3.5 a2 2 0 0 1 2 -2 H6 M17 1.5 H19.5 a2 2 0 0 1 2 2 V6 M21.5 17 V19.5 a2 2 0 0 1 -2 2 H17 M6 21.5 H3.5 a2 2 0 0 1 -2 -2 V17"/><circle cx="10.5" cy="10.5" r="5"/><path d="M14 14 L17.5 17.5" stroke-linecap="round"/></g></svg>
<div class="a t" style="left:915.5px;top:669.0px;line-height:24px;font-size:16.3px;color:#3a3a3a;">Suchfilter</div>
<div class="a" style="left:990px;top:663px;width:256px;height:34px;background:#f6f6f6;border:1px solid #c3c3c3;border-radius:4px;"></div>
<div class="a t" style="left:996px;top:669.0px;line-height:24px;font-size:16.1px;color:#3a3a3a;">Keine Auswahl</div>
<svg class="a" style="left:1223px;top:676px;" width="13" height="8" viewBox="0 0 13 8" fill="none"><path d="M1 1.5 L6.5 6.5 L12 1.5" stroke="#b5b5b5" stroke-width="1.3" stroke-linecap="round" stroke-linejoin="round"/></svg>
<div class="a t" style="left:1253px;top:669.0px;line-height:24px;font-size:16.3px;color:#3a3a3a;">Gewerk</div>
<div class="a" style="left:1313px;top:663px;width:256px;height:34px;background:#f6f6f6;border:1px solid #c3c3c3;border-radius:4px;"></div>
<div class="a t" style="left:1321px;top:669.5px;line-height:24px;font-size:16.2px;color:#3a3a3a;">&lt;Alle Gewerke&gt;</div>
<svg class="a" style="left:1546px;top:676px;" width="13" height="8" viewBox="0 0 13 8" fill="none"><path d="M1 1.5 L6.5 6.5 L12 1.5" stroke="#b5b5b5" stroke-width="1.3" stroke-linecap="round" stroke-linejoin="round"/></svg>
<div class="a" style="left:522px;top:705px;width:1990px;height:470px;background:#ffffff;border-top:1px solid #e2e2e2;border-left:1px solid #e2e2e2;"></div>
<div class="a" style="left:523px;top:706px;width:1986px;height:41px;background:#fbfbfb;"></div>
<div class="a" style="left:523px;top:747px;width:1986px;height:1px;background:#e8e8e8;"></div>
<div class="a" style="left:561.3px;top:747.5px;width:1950px;height:35.1px;background:#e6e6e6;"></div>
<div class="a" style="left:523px;top:781.6px;width:38.3px;height:1px;background:#ececec;"></div>
<div class="a" style="left:561.3px;top:782.6px;width:1950px;height:35.1px;background:#ffffff;"></div>
<div class="a" style="left:523px;top:816.7px;width:38.3px;height:1px;background:#ececec;"></div>
<div class="a" style="left:561.3px;top:817.7px;width:1950px;height:35.1px;background:#f5f5f5;"></div>
<div class="a" style="left:523px;top:851.8000000000001px;width:38.3px;height:1px;background:#ececec;"></div>
<div class="a" style="left:561.3px;top:852.8px;width:1950px;height:35.1px;background:#ffffff;"></div>
<div class="a" style="left:523px;top:886.9px;width:38.3px;height:1px;background:#ececec;"></div>
<div class="a" style="left:561.3px;top:887.9px;width:1950px;height:35.1px;background:#f5f5f5;"></div>
<div class="a" style="left:523px;top:922.0px;width:38.3px;height:1px;background:#ececec;"></div>
<div class="a" style="left:561.3px;top:923.0px;width:1950px;height:35.1px;background:#ffffff;"></div>
<div class="a" style="left:523px;top:957.1px;width:38.3px;height:1px;background:#ececec;"></div>
<div class="a" style="left:561.3px;top:958.1px;width:1950px;height:35.1px;background:#f5f5f5;"></div>
<div class="a" style="left:523px;top:992.2px;width:38.3px;height:1px;background:#ececec;"></div>
<div class="a" style="left:561.3px;top:993.2px;width:1950px;height:35.1px;background:#ffffff;"></div>
<div class="a" style="left:523px;top:1027.3px;width:38.3px;height:1px;background:#ececec;"></div>
<div class="a" style="left:561.3px;top:1028.3px;width:1950px;height:35.1px;background:#f5f5f5;"></div>
<div class="a" style="left:523px;top:1062.3999999999999px;width:38.3px;height:1px;background:#ececec;"></div>
<div class="a" style="left:561.3px;top:1063.4px;width:1950px;height:35.1px;background:#ffffff;"></div>
<div class="a" style="left:523px;top:1097.5px;width:38.3px;height:1px;background:#ececec;"></div>
<div class="a" style="left:561.3px;top:1098.5px;width:1950px;height:35.1px;background:#f5f5f5;"></div>
<div class="a" style="left:523px;top:1132.6px;width:38.3px;height:1px;background:#ececec;"></div>
<div class="a" style="left:561.3px;top:1133.6px;width:1950px;height:35.1px;background:#ffffff;"></div>
<div class="a" style="left:523px;top:1167.6999999999998px;width:38.3px;height:1px;background:#ececec;"></div>
<div class="a" style="left:561.3px;top:1168.7px;width:1950px;height:35.1px;background:#f5f5f5;"></div>
<div class="a" style="left:523px;top:1202.8px;width:38.3px;height:1px;background:#ececec;"></div>
<div class="a" style="left:561.3px;top:707px;width:1px;height:470px;background:#ebebeb;"></div>
<div class="a" style="left:584.5px;top:707px;width:1px;height:470px;background:#ebebeb;"></div>
<div class="a" style="left:872px;top:707px;width:1px;height:470px;background:#ebebeb;"></div>
<div class="a" style="left:975.6px;top:707px;width:1px;height:470px;background:#ebebeb;"></div>
<div class="a" style="left:1030px;top:707px;width:1px;height:470px;background:#ebebeb;"></div>
<div class="a" style="left:1373.5px;top:707px;width:1px;height:470px;background:#ebebeb;"></div>
<div class="a" style="left:1430px;top:707px;width:1px;height:470px;background:#ebebeb;"></div>
<div class="a" style="left:1506px;top:707px;width:1px;height:470px;background:#ebebeb;"></div>
<div class="a" style="left:1601.4px;top:707px;width:1px;height:470px;background:#ebebeb;"></div>
<div class="a" style="left:1695.8px;top:707px;width:1px;height:470px;background:#ebebeb;"></div>
<div class="a" style="left:1790.4px;top:707px;width:1px;height:470px;background:#ebebeb;"></div>
<div class="a" style="left:1885.3px;top:707px;width:1px;height:470px;background:#ebebeb;"></div>
<div class="a" style="left:2066.7px;top:707px;width:1px;height:470px;background:#ebebeb;"></div>
<div class="a" style="left:2161.5px;top:707px;width:1px;height:470px;background:#ebebeb;"></div>
<div class="a" style="left:2256.4px;top:707px;width:1px;height:470px;background:#ebebeb;"></div>
<div class="a" style="left:2350.6px;top:707px;width:1px;height:470px;background:#ebebeb;"></div>
<div class="a" style="left:2445.2px;top:707px;width:1px;height:470px;background:#ebebeb;"></div>
<div class="a t" style="left:592.5px;width:242.5px;top:715.0px;line-height:24px;font-size:16.6px;color:#3c3c3c;overflow:hidden;">Suchbegriff</div>
<div class="a t" style="left:880px;width:87.60000000000002px;top:715.0px;line-height:24px;font-size:16.6px;color:#3c3c3c;overflow:hidden;">Leistungsnummer</div>
<div class="a t" style="left:983.6px;width:38.39999999999998px;top:715.0px;line-height:24px;font-size:16.6px;color:#3c3c3c;overflow:hidden;">Gewerk</div>
<div class="a t" style="left:1038px;width:327.5px;top:715.0px;line-height:24px;font-size:16.6px;color:#3c3c3c;overflow:hidden;">Kurztext</div>
<div class="a t" style="left:1381.5px;width:40.5px;top:715.0px;line-height:24px;font-size:16.6px;color:#3c3c3c;overflow:hidden;">Menge</div>
<div class="a t" style="left:1438px;width:60px;top:715.0px;line-height:24px;font-size:16.6px;color:#3c3c3c;overflow:hidden;">Zeitbedarf</div>
<div class="a t" style="left:1514px;width:79.40000000000009px;top:715.0px;line-height:24px;font-size:16.6px;color:#3c3c3c;overflow:hidden;">Gesamt VK</div>
<div class="a t" style="left:1609.4px;width:78.39999999999986px;top:715.0px;line-height:24px;font-size:16.6px;color:#3c3c3c;overflow:hidden;">Gesamt VK</div>
<div class="a t" style="left:1703.8px;width:78.60000000000014px;top:715.0px;line-height:24px;font-size:16.6px;color:#3c3c3c;overflow:hidden;">Gesamt VK</div>
<div class="a t" style="left:1798.4px;width:78.89999999999986px;top:715.0px;line-height:24px;font-size:16.6px;color:#3c3c3c;overflow:hidden;">Gesamt VK</div>
<div class="a t" style="left:1893.3px;width:81.70000000000005px;top:715.0px;line-height:24px;font-size:16.6px;color:#3c3c3c;overflow:hidden;">Material EK</div>
<div class="a t" style="left:1980px;width:78.69999999999982px;top:715.0px;line-height:24px;font-size:16.6px;color:#3c3c3c;overflow:hidden;">Selbstkosten</div>
<div class="a t" style="left:2074.7px;width:78.80000000000018px;top:715.0px;line-height:24px;font-size:16.6px;color:#3c3c3c;overflow:hidden;">Lohnverrechnung</div>
<div class="a t" style="left:2169.5px;width:78.90000000000009px;top:715.0px;line-height:24px;font-size:16.6px;color:#3c3c3c;overflow:hidden;">Lohnverrechnung</div>
<div class="a t" style="left:2264.4px;width:78.19999999999982px;top:715.0px;line-height:24px;font-size:16.6px;color:#3c3c3c;overflow:hidden;">Lohnverrechnung</div>
<div class="a t" style="left:2358.6px;width:78.59999999999991px;top:715.0px;line-height:24px;font-size:16.6px;color:#3c3c3c;overflow:hidden;">Lohnverrechnung</div>
<div class="a t" style="left:2453.2px;width:98.80000000000018px;top:715.0px;line-height:24px;font-size:16.6px;color:#3c3c3c;overflow:hidden;">Erlöskonto</div>
<svg class="a" style="left:843px;top:721px;" width="17" height="12" viewBox="0 0 17 12" fill="none"><path d="M1 1.2 H16 M3.8 6 H13.2 M6.6 10.8 H10.4" stroke="#444" stroke-width="1.6" stroke-linecap="round"/></svg>
<svg class="a" style="left:538px;top:759.8px;" width="11" height="14" viewBox="0 0 11 14" fill="none"><path d="M1.5 1.5 L9.5 7 L1.5 12.5 Z" stroke="#555" stroke-width="1.3" fill="none" stroke-linejoin="round"/></svg>
<svg class="a" style="left:563px;top:747.5px;" width="30" height="30" viewBox="0 0 30 30" fill="none"><g stroke="#3a3a3a" stroke-width="1.5" fill="none" stroke-linecap="round" stroke-linejoin="round"><path d="M5 7.9 Q9.5 6.3 13.2 8.3 L14.6 11.8 M14.6 7.4 V11.8 H10.8"/><path d="M5 22.9 C10 23.2 13.6 20.5 14.5 15.6 M13 20.7 L15 23.1"/></g></svg>
<div class="a t" style="left:591px;width:277px;top:754.8px;line-height:24px;font-size:16.2px;color:#3c3c3c;overflow:hidden;">MINERALWOLLE-DÄMMUNG, ZWISCHEN SPARREN</div>
<div class="a t" style="left:879px;width:88px;top:754.8px;line-height:24px;font-size:16.6px;color:#3c3c3c;overflow:hidden;">0201259690</div>
<div class="a t" style="left:983px;top:754.8px;line-height:24px;font-size:16.6px;color:#3c3c3c;">004</div>
<div class="a t" style="left:1037px;width:332px;top:754.8px;line-height:24px;font-size:16.6px;color:#3c3c3c;overflow:hidden;letter-spacing:0.13px;">Mineralwolle-Dämmung, zwischen Sparren, MW, 40 mm</div>
<div class="a t" style="left:1381px;top:754.8px;line-height:24px;font-size:16.6px;color:#3c3c3c;">m<sup>2</sup></div>
<div class="a t" style="right:1061px;top:754.8px;line-height:24px;font-size:16.6px;color:#3c3c3c;text-align:right;">9,000</div>
<div class="a t" style="right:965.5px;top:754.8px;line-height:24px;font-size:16.6px;color:#3c3c3c;text-align:right;">8,60 €</div>
<div class="a t" style="right:871.2px;top:754.8px;line-height:24px;font-size:16.6px;color:#3c3c3c;text-align:right;">0,00 €</div>
<div class="a t" style="right:776.5999999999999px;top:754.8px;line-height:24px;font-size:16.6px;color:#3c3c3c;text-align:right;">0,00 €</div>
<div class="a t" style="right:681.7px;top:754.8px;line-height:24px;font-size:16.6px;color:#3c3c3c;text-align:right;">0,00 €</div>
<div class="a t" style="right:586px;top:754.8px;line-height:24px;font-size:16.6px;color:#3c3c3c;text-align:right;">2,30 €</div>
<div class="a t" style="right:500px;top:754.8px;line-height:24px;font-size:16.6px;color:#3c3c3c;text-align:right;">42,00 €</div>
<div class="a t" style="right:405px;top:754.8px;line-height:24px;font-size:16.6px;color:#3c3c3c;text-align:right;">42,00 €</div>
<div class="a t" style="right:310.5999999999999px;top:754.8px;line-height:24px;font-size:16.6px;color:#3c3c3c;text-align:right;">0,00 €</div>
<div class="a t" style="right:216.4000000000001px;top:754.8px;line-height:24px;font-size:16.6px;color:#3c3c3c;text-align:right;">0,00 €</div>
<div class="a t" style="right:121.80000000000018px;top:754.8px;line-height:24px;font-size:16.6px;color:#3c3c3c;text-align:right;">0,00 €</div>
<div class="a t" style="left:2452px;top:754.8px;line-height:24px;font-size:16.6px;color:#3c3c3c;">8400</div>
<svg class="a" style="left:563px;top:782.6px;" width="30" height="30" viewBox="0 0 30 30" fill="none"><g stroke="#3a3a3a" stroke-width="1.5" fill="none" stroke-linecap="round" stroke-linejoin="round"><path d="M5 7.9 Q9.5 6.3 13.2 8.3 L14.6 11.8 M14.6 7.4 V11.8 H10.8"/><path d="M5 22.9 C10 23.2 13.6 20.5 14.5 15.6 M13 20.7 L15 23.1"/></g></svg>
<div class="a t" style="left:591px;width:277px;top:789.9px;line-height:24px;font-size:16.2px;color:#3c3c3c;overflow:hidden;">MINERALWOLLE-DÄMMUNG, ZWISCHEN SPARREN</div>
<div class="a t" style="left:879px;width:88px;top:789.9px;line-height:24px;font-size:16.6px;color:#3c3c3c;overflow:hidden;">0201259690</div>
<div class="a t" style="left:983px;top:789.9px;line-height:24px;font-size:16.6px;color:#3c3c3c;">004</div>
<div class="a t" style="left:1037px;width:332px;top:789.9px;line-height:24px;font-size:16.6px;color:#3c3c3c;overflow:hidden;letter-spacing:0.13px;">Mineralwolle-Dämmung, zwischen Sparren, 5W, 40 mm</div>
<div class="a t" style="left:1381px;top:789.9px;line-height:24px;font-size:16.6px;color:#3c3c3c;">m<sup>2</sup></div>
<div class="a t" style="right:1061px;top:789.9px;line-height:24px;font-size:16.6px;color:#3c3c3c;text-align:right;">11,000</div>
<div class="a t" style="right:965.5px;top:789.9px;line-height:24px;font-size:16.6px;color:#3c3c3c;text-align:right;">11,16 €</div>
<div class="a t" style="right:871.2px;top:789.9px;line-height:24px;font-size:16.6px;color:#3c3c3c;text-align:right;">0,00 €</div>
<div class="a t" style="right:776.5999999999999px;top:789.9px;line-height:24px;font-size:16.6px;color:#3c3c3c;text-align:right;">0,00 €</div>
<div class="a t" style="right:681.7px;top:789.9px;line-height:24px;font-size:16.6px;color:#3c3c3c;text-align:right;">0,00 €</div>
<div class="a t" style="right:586px;top:789.9px;line-height:24px;font-size:16.6px;color:#3c3c3c;text-align:right;">3,60 €</div>
<div class="a t" style="right:500px;top:789.9px;line-height:24px;font-size:16.6px;color:#3c3c3c;text-align:right;">41,24 €</div>
<div class="a t" style="right:405px;top:789.9px;line-height:24px;font-size:16.6px;color:#3c3c3c;text-align:right;">41,24 €</div>
<div class="a t" style="right:310.5999999999999px;top:789.9px;line-height:24px;font-size:16.6px;color:#3c3c3c;text-align:right;">0,00 €</div>
<div class="a t" style="right:216.4000000000001px;top:789.9px;line-height:24px;font-size:16.6px;color:#3c3c3c;text-align:right;">0,00 €</div>
<div class="a t" style="right:121.80000000000018px;top:789.9px;line-height:24px;font-size:16.6px;color:#3c3c3c;text-align:right;">0,00 €</div>
<div class="a t" style="left:2452px;top:789.9px;line-height:24px;font-size:16.6px;color:#3c3c3c;">8400</div>
<svg class="a" style="left:563px;top:817.7px;" width="30" height="30" viewBox="0 0 30 30" fill="none"><g stroke="#3a3a3a" stroke-width="1.5" fill="none" stroke-linecap="round" stroke-linejoin="round"><path d="M5 7.9 Q9.5 6.3 13.2 8.3 L14.6 11.8 M14.6 7.4 V11.8 H10.8"/><path d="M5 22.9 C10 23.2 13.6 20.5 14.5 15.6 M13 20.7 L15 23.1"/></g></svg>
<div class="a t" style="left:591px;width:277px;top:825.0px;line-height:24px;font-size:16.2px;color:#3c3c3c;overflow:hidden;">MINERALWOLLE-DÄMMUNG, ZWISCHEN SPARREN</div>
<div class="a t" style="left:879px;width:88px;top:825.0px;line-height:24px;font-size:16.6px;color:#3c3c3c;overflow:hidden;">0201259690</div>
<div class="a t" style="left:983px;top:825.0px;line-height:24px;font-size:16.6px;color:#3c3c3c;">004</div>
<div class="a t" style="left:1037px;width:332px;top:825.0px;line-height:24px;font-size:16.6px;color:#3c3c3c;overflow:hidden;letter-spacing:0.13px;">Mineralwolle-Dämmung, zwischen Sparren, 8W, 40 mm</div>
<div class="a t" style="left:1381px;top:825.0px;line-height:24px;font-size:16.6px;color:#3c3c3c;">m<sup>2</sup></div>
<div class="a t" style="right:1061px;top:825.0px;line-height:24px;font-size:16.6px;color:#3c3c3c;text-align:right;">13,000</div>
<div class="a t" style="right:965.5px;top:825.0px;line-height:24px;font-size:16.6px;color:#3c3c3c;text-align:right;">12,59 €</div>
<div class="a t" style="right:871.2px;top:825.0px;line-height:24px;font-size:16.6px;color:#3c3c3c;text-align:right;">0,00 €</div>
<div class="a t" style="right:776.5999999999999px;top:825.0px;line-height:24px;font-size:16.6px;color:#3c3c3c;text-align:right;">0,00 €</div>
<div class="a t" style="right:681.7px;top:825.0px;line-height:24px;font-size:16.6px;color:#3c3c3c;text-align:right;">0,00 €</div>
<div class="a t" style="right:586px;top:825.0px;line-height:24px;font-size:16.6px;color:#3c3c3c;text-align:right;">3,35 €</div>
<div class="a t" style="right:500px;top:825.0px;line-height:24px;font-size:16.6px;color:#3c3c3c;text-align:right;">42,65 €</div>
<div class="a t" style="right:405px;top:825.0px;line-height:24px;font-size:16.6px;color:#3c3c3c;text-align:right;">42,65 €</div>
<div class="a t" style="right:310.5999999999999px;top:825.0px;line-height:24px;font-size:16.6px;color:#3c3c3c;text-align:right;">0,00 €</div>
<div class="a t" style="right:216.4000000000001px;top:825.0px;line-height:24px;font-size:16.6px;color:#3c3c3c;text-align:right;">0,00 €</div>
<div class="a t" style="right:121.80000000000018px;top:825.0px;line-height:24px;font-size:16.6px;color:#3c3c3c;text-align:right;">0,00 €</div>
<div class="a t" style="left:2452px;top:825.0px;line-height:24px;font-size:16.6px;color:#3c3c3c;">8400</div>
<svg class="a" style="left:563px;top:852.8px;" width="30" height="30" viewBox="0 0 30 30" fill="none"><g stroke="#3a3a3a" stroke-width="1.5" fill="none" stroke-linecap="round" stroke-linejoin="round"><path d="M5 7.9 Q9.5 6.3 13.2 8.3 L14.6 11.8 M14.6 7.4 V11.8 H10.8"/><path d="M5 22.9 C10 23.2 13.6 20.5 14.5 15.6 M13 20.7 L15 23.1"/></g></svg>
<div class="a t" style="left:591px;width:277px;top:860.1px;line-height:24px;font-size:16.2px;color:#3c3c3c;overflow:hidden;">MINERALWOLLE-DÄMMUNG, ZWISCHEN SPARREN</div>
<div class="a t" style="left:879px;width:88px;top:860.1px;line-height:24px;font-size:16.6px;color:#3c3c3c;overflow:hidden;">0201258957</div>
<div class="a t" style="left:983px;top:860.1px;line-height:24px;font-size:16.6px;color:#3c3c3c;">004</div>
<div class="a t" style="left:1037px;width:332px;top:860.1px;line-height:24px;font-size:16.6px;color:#3c3c3c;overflow:hidden;letter-spacing:0.13px;">Mineralwolle-Dämmung, zwischen Sparren, 1W, 40 mm</div>
<div class="a t" style="left:1381px;top:860.1px;line-height:24px;font-size:16.6px;color:#3c3c3c;">m<sup>2</sup></div>
<div class="a t" style="right:1061px;top:860.1px;line-height:24px;font-size:16.6px;color:#3c3c3c;text-align:right;">12,000</div>
<div class="a t" style="right:965.5px;top:860.1px;line-height:24px;font-size:16.6px;color:#3c3c3c;text-align:right;">14,25 €</div>
<div class="a t" style="right:871.2px;top:860.1px;line-height:24px;font-size:16.6px;color:#3c3c3c;text-align:right;">0,00 €</div>
<div class="a t" style="right:776.5999999999999px;top:860.1px;line-height:24px;font-size:16.6px;color:#3c3c3c;text-align:right;">0,00 €</div>
<div class="a t" style="right:681.7px;top:860.1px;line-height:24px;font-size:16.6px;color:#3c3c3c;text-align:right;">0,00 €</div>
<div class="a t" style="right:586px;top:860.1px;line-height:24px;font-size:16.6px;color:#3c3c3c;text-align:right;">5,85 €</div>
<div class="a t" style="right:500px;top:860.1px;line-height:24px;font-size:16.6px;color:#3c3c3c;text-align:right;">42,00 €</div>
<div class="a t" style="right:405px;top:860.1px;line-height:24px;font-size:16.6px;color:#3c3c3c;text-align:right;">42,00 €</div>
<div class="a t" style="right:310.5999999999999px;top:860.1px;line-height:24px;font-size:16.6px;color:#3c3c3c;text-align:right;">0,00 €</div>
<div class="a t" style="right:216.4000000000001px;top:860.1px;line-height:24px;font-size:16.6px;color:#3c3c3c;text-align:right;">0,00 €</div>
<div class="a t" style="right:121.80000000000018px;top:860.1px;line-height:24px;font-size:16.6px;color:#3c3c3c;text-align:right;">0,00 €</div>
<div class="a t" style="left:2452px;top:860.1px;line-height:24px;font-size:16.6px;color:#3c3c3c;">8400</div>
<svg class="a" style="left:563px;top:887.9px;" width="30" height="30" viewBox="0 0 30 30" fill="none"><g stroke="#3a3a3a" stroke-width="1.5" fill="none" stroke-linecap="round" stroke-linejoin="round"><path d="M5 7.9 Q9.5 6.3 13.2 8.3 L14.6 11.8 M14.6 7.4 V11.8 H10.8"/><path d="M5 22.9 C10 23.2 13.6 20.5 14.5 15.6 M13 20.7 L15 23.1"/></g></svg>
<div class="a t" style="left:591px;width:277px;top:895.2px;line-height:24px;font-size:16.2px;color:#3c3c3c;overflow:hidden;">MINERALWOLLE-DÄMMUNG, ZWISCHEN SPARREN</div>
<div class="a t" style="left:879px;width:88px;top:895.2px;line-height:24px;font-size:16.6px;color:#3c3c3c;overflow:hidden;">0201259689</div>
<div class="a t" style="left:983px;top:895.2px;line-height:24px;font-size:16.6px;color:#3c3c3c;">004</div>
<div class="a t" style="left:1037px;width:332px;top:895.2px;line-height:24px;font-size:16.6px;color:#3c3c3c;overflow:hidden;letter-spacing:0.13px;">Mineralwolle-Dämmung, zwischen Sparren, 1W, 40 mm</div>
<div class="a t" style="left:1381px;top:895.2px;line-height:24px;font-size:16.6px;color:#3c3c3c;">m<sup>2</sup></div>
<div class="a t" style="right:1061px;top:895.2px;line-height:24px;font-size:16.6px;color:#3c3c3c;text-align:right;">13,000</div>
<div class="a t" style="right:965.5px;top:895.2px;line-height:24px;font-size:16.6px;color:#3c3c3c;text-align:right;">14,59 €</div>
<div class="a t" style="right:871.2px;top:895.2px;line-height:24px;font-size:16.6px;color:#3c3c3c;text-align:right;">0,00 €</div>
<div class="a t" style="right:776.5999999999999px;top:895.2px;line-height:24px;font-size:16.6px;color:#3c3c3c;text-align:right;">0,00 €</div>
<div class="a t" style="right:681.7px;top:895.2px;line-height:24px;font-size:16.6px;color:#3c3c3c;text-align:right;">0,00 €</div>
<div class="a t" style="right:586px;top:895.2px;line-height:24px;font-size:16.6px;color:#3c3c3c;text-align:right;">5,35 €</div>
<div class="a t" style="right:500px;top:895.2px;line-height:24px;font-size:16.6px;color:#3c3c3c;text-align:right;">42,65 €</div>
<div class="a t" style="right:405px;top:895.2px;line-height:24px;font-size:16.6px;color:#3c3c3c;text-align:right;">42,65 €</div>
<div class="a t" style="right:310.5999999999999px;top:895.2px;line-height:24px;font-size:16.6px;color:#3c3c3c;text-align:right;">0,00 €</div>
<div class="a t" style="right:216.4000000000001px;top:895.2px;line-height:24px;font-size:16.6px;color:#3c3c3c;text-align:right;">0,00 €</div>
<div class="a t" style="right:121.80000000000018px;top:895.2px;line-height:24px;font-size:16.6px;color:#3c3c3c;text-align:right;">0,00 €</div>
<div class="a t" style="left:2452px;top:895.2px;line-height:24px;font-size:16.6px;color:#3c3c3c;">8400</div>
<svg class="a" style="left:563px;top:923.0px;" width="30" height="30" viewBox="0 0 30 30" fill="none"><g stroke="#3a3a3a" stroke-width="1.5" fill="none" stroke-linecap="round" stroke-linejoin="round"><path d="M5 7.9 Q9.5 6.3 13.2 8.3 L14.6 11.8 M14.6 7.4 V11.8 H10.8"/><path d="M5 22.9 C10 23.2 13.6 20.5 14.5 15.6 M13 20.7 L15 23.1"/></g></svg>
<div class="a t" style="left:591px;width:277px;top:930.3px;line-height:24px;font-size:16.2px;color:#3c3c3c;overflow:hidden;">MINERALWOLLE-DÄMMUNG, ZWISCHEN SPARREN</div>
<div class="a t" style="left:879px;width:88px;top:930.3px;line-height:24px;font-size:16.6px;color:#3c3c3c;overflow:hidden;">0201259689</div>
<div class="a t" style="left:983px;top:930.3px;line-height:24px;font-size:16.6px;color:#3c3c3c;">004</div>
<div class="a t" style="left:1037px;width:332px;top:930.3px;line-height:24px;font-size:16.6px;color:#3c3c3c;overflow:hidden;letter-spacing:0.13px;">Mineralwolle-Dämmung, zwischen Sparren, 1W, 40 mm</div>
<div class="a t" style="left:1381px;top:930.3px;line-height:24px;font-size:16.6px;color:#3c3c3c;">m<sup>2</sup></div>
<div class="a t" style="right:1061px;top:930.3px;line-height:24px;font-size:16.6px;color:#3c3c3c;text-align:right;">11,000</div>
<div class="a t" style="right:965.5px;top:930.3px;line-height:24px;font-size:16.6px;color:#3c3c3c;text-align:right;">13,66 €</div>
<div class="a t" style="right:871.2px;top:930.3px;line-height:24px;font-size:16.6px;color:#3c3c3c;text-align:right;">0,00 €</div>
<div class="a t" style="right:776.5999999999999px;top:930.3px;line-height:24px;font-size:16.6px;color:#3c3c3c;text-align:right;">0,00 €</div>
<div class="a t" style="right:681.7px;top:930.3px;line-height:24px;font-size:16.6px;color:#3c3c3c;text-align:right;">0,00 €</div>
<div class="a t" style="right:586px;top:930.3px;line-height:24px;font-size:16.6px;color:#3c3c3c;text-align:right;">6,10 €</div>
<div class="a t" style="right:500px;top:930.3px;line-height:24px;font-size:16.6px;color:#3c3c3c;text-align:right;">41,24 €</div>
<div class="a t" style="right:405px;top:930.3px;line-height:24px;font-size:16.6px;color:#3c3c3c;text-align:right;">41,24 €</div>
<div class="a t" style="right:310.5999999999999px;top:930.3px;line-height:24px;font-size:16.6px;color:#3c3c3c;text-align:right;">0,00 €</div>
<div class="a t" style="right:216.4000000000001px;top:930.3px;line-height:24px;font-size:16.6px;color:#3c3c3c;text-align:right;">0,00 €</div>
<div class="a t" style="right:121.80000000000018px;top:930.3px;line-height:24px;font-size:16.6px;color:#3c3c3c;text-align:right;">0,00 €</div>
<div class="a t" style="left:2452px;top:930.3px;line-height:24px;font-size:16.6px;color:#3c3c3c;">8400</div>
<svg class="a" style="left:563px;top:958.1px;" width="30" height="30" viewBox="0 0 30 30" fill="none"><g stroke="#3a3a3a" stroke-width="1.5" fill="none" stroke-linecap="round" stroke-linejoin="round"><path d="M5 7.9 Q9.5 6.3 13.2 8.3 L14.6 11.8 M14.6 7.4 V11.8 H10.8"/><path d="M5 22.9 C10 23.2 13.6 20.5 14.5 15.6 M13 20.7 L15 23.1"/></g></svg>
<div class="a t" style="left:591px;width:277px;top:965.4px;line-height:24px;font-size:16.2px;color:#3c3c3c;overflow:hidden;">MINERALWOLLE-DÄMMUNG, ZWISCHEN SPARREN</div>
<div class="a t" style="left:879px;width:88px;top:965.4px;line-height:24px;font-size:16.6px;color:#3c3c3c;overflow:hidden;">0201259690</div>
<div class="a t" style="left:983px;top:965.4px;line-height:24px;font-size:16.6px;color:#3c3c3c;">004</div>
<div class="a t" style="left:1037px;width:332px;top:965.4px;line-height:24px;font-size:16.6px;color:#3c3c3c;overflow:hidden;letter-spacing:0.13px;">Mineralwolle-Dämmung, zwischen Sparren, 2W, 40 mm</div>
<div class="a t" style="left:1381px;top:965.4px;line-height:24px;font-size:16.6px;color:#3c3c3c;">m<sup>2</sup></div>
<div class="a t" style="right:1061px;top:965.4px;line-height:24px;font-size:16.6px;color:#3c3c3c;text-align:right;">15,000</div>
<div class="a t" style="right:965.5px;top:965.4px;line-height:24px;font-size:16.6px;color:#3c3c3c;text-align:right;">18,85 €</div>
<div class="a t" style="right:871.2px;top:965.4px;line-height:24px;font-size:16.6px;color:#3c3c3c;text-align:right;">0,00 €</div>
<div class="a t" style="right:776.5999999999999px;top:965.4px;line-height:24px;font-size:16.6px;color:#3c3c3c;text-align:right;">0,00 €</div>
<div class="a t" style="right:681.7px;top:965.4px;line-height:24px;font-size:16.6px;color:#3c3c3c;text-align:right;">0,00 €</div>
<div class="a t" style="right:586px;top:965.4px;line-height:24px;font-size:16.6px;color:#3c3c3c;text-align:right;">8,35 €</div>
<div class="a t" style="right:500px;top:965.4px;line-height:24px;font-size:16.6px;color:#3c3c3c;text-align:right;">42,00 €</div>
<div class="a t" style="right:405px;top:965.4px;line-height:24px;font-size:16.6px;color:#3c3c3c;text-align:right;">42,00 €</div>
<div class="a t" style="right:310.5999999999999px;top:965.4px;line-height:24px;font-size:16.6px;color:#3c3c3c;text-align:right;">0,00 €</div>
<div class="a t" style="right:216.4000000000001px;top:965.4px;line-height:24px;font-size:16.6px;color:#3c3c3c;text-align:right;">0,00 €</div>
<div class="a t" style="right:121.80000000000018px;top:965.4px;line-height:24px;font-size:16.6px;color:#3c3c3c;text-align:right;">0,00 €</div>
<div class="a t" style="left:2452px;top:965.4px;line-height:24px;font-size:16.6px;color:#3c3c3c;">8400</div>
<svg class="a" style="left:563px;top:993.2px;" width="30" height="30" viewBox="0 0 30 30" fill="none"><g stroke="#3a3a3a" stroke-width="1.5" fill="none" stroke-linecap="round" stroke-linejoin="round"><path d="M5 7.9 Q9.5 6.3 13.2 8.3 L14.6 11.8 M14.6 7.4 V11.8 H10.8"/><path d="M5 22.9 C10 23.2 13.6 20.5 14.5 15.6 M13 20.7 L15 23.1"/></g></svg>
<div class="a t" style="left:591px;width:277px;top:1000.5px;line-height:24px;font-size:16.2px;color:#3c3c3c;overflow:hidden;">MINERALWOLLE-DÄMMUNG, ZWISCHEN SPARREN</div>
<div class="a t" style="left:879px;width:88px;top:1000.5px;line-height:24px;font-size:16.6px;color:#3c3c3c;overflow:hidden;">0201259690</div>
<div class="a t" style="left:983px;top:1000.5px;line-height:24px;font-size:16.6px;color:#3c3c3c;">004</div>
<div class="a t" style="left:1037px;width:332px;top:1000.5px;line-height:24px;font-size:16.6px;color:#3c3c3c;overflow:hidden;letter-spacing:0.13px;">Mineralwolle-Dämmung, zwischen Sparren, 1W, 40 mm</div>
<div class="a t" style="left:1381px;top:1000.5px;line-height:24px;font-size:16.6px;color:#3c3c3c;">m<sup>2</sup></div>
<div class="a t" style="right:1061px;top:1000.5px;line-height:24px;font-size:16.6px;color:#3c3c3c;text-align:right;">11,000</div>
<div class="a t" style="right:965.5px;top:1000.5px;line-height:24px;font-size:16.6px;color:#3c3c3c;text-align:right;">14,41 €</div>
<div class="a t" style="right:871.2px;top:1000.5px;line-height:24px;font-size:16.6px;color:#3c3c3c;text-align:right;">0,00 €</div>
<div class="a t" style="right:776.5999999999999px;top:1000.5px;line-height:24px;font-size:16.6px;color:#3c3c3c;text-align:right;">0,00 €</div>
<div class="a t" style="right:681.7px;top:1000.5px;line-height:24px;font-size:16.6px;color:#3c3c3c;text-align:right;">0,00 €</div>
<div class="a t" style="right:586px;top:1000.5px;line-height:24px;font-size:16.6px;color:#3c3c3c;text-align:right;">6,85 €</div>
<div class="a t" style="right:500px;top:1000.5px;line-height:24px;font-size:16.6px;color:#3c3c3c;text-align:right;">41,24 €</div>
<div class="a t" style="right:405px;top:1000.5px;line-height:24px;font-size:16.6px;color:#3c3c3c;text-align:right;">41,24 €</div>
<div class="a t" style="right:310.5999999999999px;top:1000.5px;line-height:24px;font-size:16.6px;color:#3c3c3c;text-align:right;">0,00 €</div>
<div class="a t" style="right:216.4000000000001px;top:1000.5px;line-height:24px;font-size:16.6px;color:#3c3c3c;text-align:right;">0,00 €</div>
<div class="a t" style="right:121.80000000000018px;top:1000.5px;line-height:24px;font-size:16.6px;color:#3c3c3c;text-align:right;">0,00 €</div>
<div class="a t" style="left:2452px;top:1000.5px;line-height:24px;font-size:16.6px;color:#3c3c3c;">8400</div>
<svg class="a" style="left:563px;top:1028.3px;" width="30" height="30" viewBox="0 0 30 30" fill="none"><g stroke="#3a3a3a" stroke-width="1.5" fill="none" stroke-linecap="round" stroke-linejoin="round"><path d="M5 7.9 Q9.5 6.3 13.2 8.3 L14.6 11.8 M14.6 7.4 V11.8 H10.8"/><path d="M5 22.9 C10 23.2 13.6 20.5 14.5 15.6 M13 20.7 L15 23.1"/></g></svg>
<div class="a t" style="left:591px;width:277px;top:1035.6px;line-height:24px;font-size:16.2px;color:#3c3c3c;overflow:hidden;">MINERALWOLLE-DÄMMUNG, ZWISCHEN SPARREN</div>
<div class="a t" style="left:879px;width:88px;top:1035.6px;line-height:24px;font-size:16.6px;color:#3c3c3c;overflow:hidden;">0201259690</div>
<div class="a t" style="left:983px;top:1035.6px;line-height:24px;font-size:16.6px;color:#3c3c3c;">004</div>
<div class="a t" style="left:1037px;width:332px;top:1035.6px;line-height:24px;font-size:16.6px;color:#3c3c3c;overflow:hidden;letter-spacing:0.13px;">Mineralwolle-Dämmung, zwischen Sparren, 1W, 40 mm</div>
<div class="a t" style="left:1381px;top:1035.6px;line-height:24px;font-size:16.6px;color:#3c3c3c;">m<sup>2</sup></div>
<div class="a t" style="right:1061px;top:1035.6px;line-height:24px;font-size:16.6px;color:#3c3c3c;text-align:right;">12,000</div>
<div class="a t" style="right:965.5px;top:1035.6px;line-height:24px;font-size:16.6px;color:#3c3c3c;text-align:right;">16,00 €</div>
<div class="a t" style="right:871.2px;top:1035.6px;line-height:24px;font-size:16.6px;color:#3c3c3c;text-align:right;">0,00 €</div>
<div class="a t" style="right:776.5999999999999px;top:1035.6px;line-height:24px;font-size:16.6px;color:#3c3c3c;text-align:right;">0,00 €</div>
<div class="a t" style="right:681.7px;top:1035.6px;line-height:24px;font-size:16.6px;color:#3c3c3c;text-align:right;">0,00 €</div>
<div class="a t" style="right:586px;top:1035.6px;line-height:24px;font-size:16.6px;color:#3c3c3c;text-align:right;">7,60 €</div>
<div class="a t" style="right:500px;top:1035.6px;line-height:24px;font-size:16.6px;color:#3c3c3c;text-align:right;">42,00 €</div>
<div class="a t" style="right:405px;top:1035.6px;line-height:24px;font-size:16.6px;color:#3c3c3c;text-align:right;">42,00 €</div>
<div class="a t" style="right:310.5999999999999px;top:1035.6px;line-height:24px;font-size:16.6px;color:#3c3c3c;text-align:right;">0,00 €</div>
<div class="a t" style="right:216.4000000000001px;top:1035.6px;line-height:24px;font-size:16.6px;color:#3c3c3c;text-align:right;">0,00 €</div>
<div class="a t" style="right:121.80000000000018px;top:1035.6px;line-height:24px;font-size:16.6px;color:#3c3c3c;text-align:right;">0,00 €</div>
<div class="a t" style="left:2452px;top:1035.6px;line-height:24px;font-size:16.6px;color:#3c3c3c;">8400</div>
<svg class="a" style="left:563px;top:1063.4px;" width="30" height="30" viewBox="0 0 30 30" fill="none"><g stroke="#3a3a3a" stroke-width="1.5" fill="none" stroke-linecap="round" stroke-linejoin="round"><path d="M5 7.9 Q9.5 6.3 13.2 8.3 L14.6 11.8 M14.6 7.4 V11.8 H10.8"/><path d="M5 22.9 C10 23.2 13.6 20.5 14.5 15.6 M13 20.7 L15 23.1"/></g></svg>
<div class="a t" style="left:591px;width:277px;top:1070.7px;line-height:24px;font-size:16.2px;color:#3c3c3c;overflow:hidden;">MINERALWOLLE-DÄMMUNG, ZWISCHEN SPARREN</div>
<div class="a t" style="left:879px;width:88px;top:1070.7px;line-height:24px;font-size:16.6px;color:#3c3c3c;overflow:hidden;">0201259690</div>
<div class="a t" style="left:983px;top:1070.7px;line-height:24px;font-size:16.6px;color:#3c3c3c;">004</div>
<div class="a t" style="left:1037px;width:332px;top:1070.7px;line-height:24px;font-size:16.6px;color:#3c3c3c;overflow:hidden;letter-spacing:0.13px;">Mineralwolle-Dämmung, zwischen Sparren, 1W, 40 mm</div>
<div class="a t" style="left:1381px;top:1070.7px;line-height:24px;font-size:16.6px;color:#3c3c3c;">m<sup>2</sup></div>
<div class="a t" style="right:1061px;top:1070.7px;line-height:24px;font-size:16.6px;color:#3c3c3c;text-align:right;">13,000</div>
<div class="a t" style="right:965.5px;top:1070.7px;line-height:24px;font-size:16.6px;color:#3c3c3c;text-align:right;">17,64 €</div>
<div class="a t" style="right:871.2px;top:1070.7px;line-height:24px;font-size:16.6px;color:#3c3c3c;text-align:right;">0,00 €</div>
<div class="a t" style="right:776.5999999999999px;top:1070.7px;line-height:24px;font-size:16.6px;color:#3c3c3c;text-align:right;">0,00 €</div>
<div class="a t" style="right:681.7px;top:1070.7px;line-height:24px;font-size:16.6px;color:#3c3c3c;text-align:right;">0,00 €</div>
<div class="a t" style="right:586px;top:1070.7px;line-height:24px;font-size:16.6px;color:#3c3c3c;text-align:right;">8,40 €</div>
<div class="a t" style="right:500px;top:1070.7px;line-height:24px;font-size:16.6px;color:#3c3c3c;text-align:right;">42,65 €</div>
<div class="a t" style="right:405px;top:1070.7px;line-height:24px;font-size:16.6px;color:#3c3c3c;text-align:right;">42,65 €</div>
<div class="a t" style="right:310.5999999999999px;top:1070.7px;line-height:24px;font-size:16.6px;color:#3c3c3c;text-align:right;">0,00 €</div>
<div class="a t" style="right:216.4000000000001px;top:1070.7px;line-height:24px;font-size:16.6px;color:#3c3c3c;text-align:right;">0,00 €</div>
<div class="a t" style="right:121.80000000000018px;top:1070.7px;line-height:24px;font-size:16.6px;color:#3c3c3c;text-align:right;">0,00 €</div>
<div class="a t" style="left:2452px;top:1070.7px;line-height:24px;font-size:16.6px;color:#3c3c3c;">8400</div>
<svg class="a" style="left:563px;top:1098.5px;" width="30" height="30" viewBox="0 0 30 30" fill="none"><g stroke="#3a3a3a" stroke-width="1.5" fill="none" stroke-linecap="round" stroke-linejoin="round"><path d="M5 7.9 Q9.5 6.3 13.2 8.3 L14.6 11.8 M14.6 7.4 V11.8 H10.8"/><path d="M5 22.9 C10 23.2 13.6 20.5 14.5 15.6 M13 20.7 L15 23.1"/></g></svg>
<div class="a t" style="left:591px;width:277px;top:1105.8px;line-height:24px;font-size:16.2px;color:#3c3c3c;overflow:hidden;">MINERALWOLLE-DÄMMUNG, ZWISCHEN SPARREN</div>
<div class="a t" style="left:879px;width:88px;top:1105.8px;line-height:24px;font-size:16.6px;color:#3c3c3c;overflow:hidden;">0201259690</div>
<div class="a t" style="left:983px;top:1105.8px;line-height:24px;font-size:16.6px;color:#3c3c3c;">004</div>
<div class="a t" style="left:1037px;width:332px;top:1105.8px;line-height:24px;font-size:16.6px;color:#3c3c3c;overflow:hidden;letter-spacing:0.13px;">Mineralwolle-Dämmung, zwischen Sparren, 1W, 40 mm</div>
<div class="a t" style="left:1381px;top:1105.8px;line-height:24px;font-size:16.6px;color:#3c3c3c;">m<sup>2</sup></div>
<div class="a t" style="right:1061px;top:1105.8px;line-height:24px;font-size:16.6px;color:#3c3c3c;text-align:right;">14,000</div>
<div class="a t" style="right:965.5px;top:1105.8px;line-height:24px;font-size:16.6px;color:#3c3c3c;text-align:right;">19,23 €</div>
<div class="a t" style="right:871.2px;top:1105.8px;line-height:24px;font-size:16.6px;color:#3c3c3c;text-align:right;">0,00 €</div>
<div class="a t" style="right:776.5999999999999px;top:1105.8px;line-height:24px;font-size:16.6px;color:#3c3c3c;text-align:right;">0,00 €</div>
<div class="a t" style="right:681.7px;top:1105.8px;line-height:24px;font-size:16.6px;color:#3c3c3c;text-align:right;">0,00 €</div>
<div class="a t" style="right:586px;top:1105.8px;line-height:24px;font-size:16.6px;color:#3c3c3c;text-align:right;">9,15 €</div>
<div class="a t" style="right:500px;top:1105.8px;line-height:24px;font-size:16.6px;color:#3c3c3c;text-align:right;">43,20 €</div>
<div class="a t" style="right:405px;top:1105.8px;line-height:24px;font-size:16.6px;color:#3c3c3c;text-align:right;">43,20 €</div>
<div class="a t" style="right:310.5999999999999px;top:1105.8px;line-height:24px;font-size:16.6px;color:#3c3c3c;text-align:right;">0,00 €</div>
<div class="a t" style="right:216.4000000000001px;top:1105.8px;line-height:24px;font-size:16.6px;color:#3c3c3c;text-align:right;">0,00 €</div>
<div class="a t" style="right:121.80000000000018px;top:1105.8px;line-height:24px;font-size:16.6px;color:#3c3c3c;text-align:right;">0,00 €</div>
<div class="a t" style="left:2452px;top:1105.8px;line-height:24px;font-size:16.6px;color:#3c3c3c;">8400</div>
<svg class="a" style="left:563px;top:1133.6px;" width="30" height="30" viewBox="0 0 30 30" fill="none"><g stroke="#3a3a3a" stroke-width="1.5" fill="none" stroke-linecap="round" stroke-linejoin="round"><path d="M5 7.9 Q9.5 6.3 13.2 8.3 L14.6 11.8 M14.6 7.4 V11.8 H10.8"/><path d="M5 22.9 C10 23.2 13.6 20.5 14.5 15.6 M13 20.7 L15 23.1"/></g></svg>
<div class="a t" style="left:591px;width:277px;top:1140.9px;line-height:24px;font-size:16.2px;color:#3c3c3c;overflow:hidden;">MINERALWOLLE-DÄMMUNG, ZWISCHEN SPARREN</div>
<div class="a t" style="left:879px;width:88px;top:1140.9px;line-height:24px;font-size:16.6px;color:#3c3c3c;overflow:hidden;">0201259694</div>
<div class="a t" style="left:983px;top:1140.9px;line-height:24px;font-size:16.6px;color:#3c3c3c;">004</div>
<div class="a t" style="left:1037px;width:332px;top:1140.9px;line-height:24px;font-size:16.6px;color:#3c3c3c;overflow:hidden;letter-spacing:0.13px;">Mineralwolle-Dämmung, zwischen Sparren, 1W, 40 mm</div>
<div class="a t" style="left:1381px;top:1140.9px;line-height:24px;font-size:16.6px;color:#3c3c3c;">m<sup>2</sup></div>
<div class="a t" style="right:1061px;top:1140.9px;line-height:24px;font-size:16.6px;color:#3c3c3c;text-align:right;">15,000</div>
<div class="a t" style="right:965.5px;top:1140.9px;line-height:24px;font-size:16.6px;color:#3c3c3c;text-align:right;">21,40 €</div>
<div class="a t" style="right:871.2px;top:1140.9px;line-height:24px;font-size:16.6px;color:#3c3c3c;text-align:right;">0,00 €</div>
<div class="a t" style="right:776.5999999999999px;top:1140.9px;line-height:24px;font-size:16.6px;color:#3c3c3c;text-align:right;">0,00 €</div>
<div class="a t" style="right:681.7px;top:1140.9px;line-height:24px;font-size:16.6px;color:#3c3c3c;text-align:right;">0,00 €</div>
<div class="a t" style="right:586px;top:1140.9px;line-height:24px;font-size:16.6px;color:#3c3c3c;text-align:right;">10,90 €</div>
<div class="a t" style="right:500px;top:1140.9px;line-height:24px;font-size:16.6px;color:#3c3c3c;text-align:right;">42,00 €</div>
<div class="a t" style="right:405px;top:1140.9px;line-height:24px;font-size:16.6px;color:#3c3c3c;text-align:right;">42,00 €</div>
<div class="a t" style="right:310.5999999999999px;top:1140.9px;line-height:24px;font-size:16.6px;color:#3c3c3c;text-align:right;">0,00 €</div>
<div class="a t" style="right:216.4000000000001px;top:1140.9px;line-height:24px;font-size:16.6px;color:#3c3c3c;text-align:right;">0,00 €</div>
<div class="a t" style="right:121.80000000000018px;top:1140.9px;line-height:24px;font-size:16.6px;color:#3c3c3c;text-align:right;">0,00 €</div>
<div class="a t" style="left:2452px;top:1140.9px;line-height:24px;font-size:16.6px;color:#3c3c3c;">8400</div>
</div>
</body></html>
